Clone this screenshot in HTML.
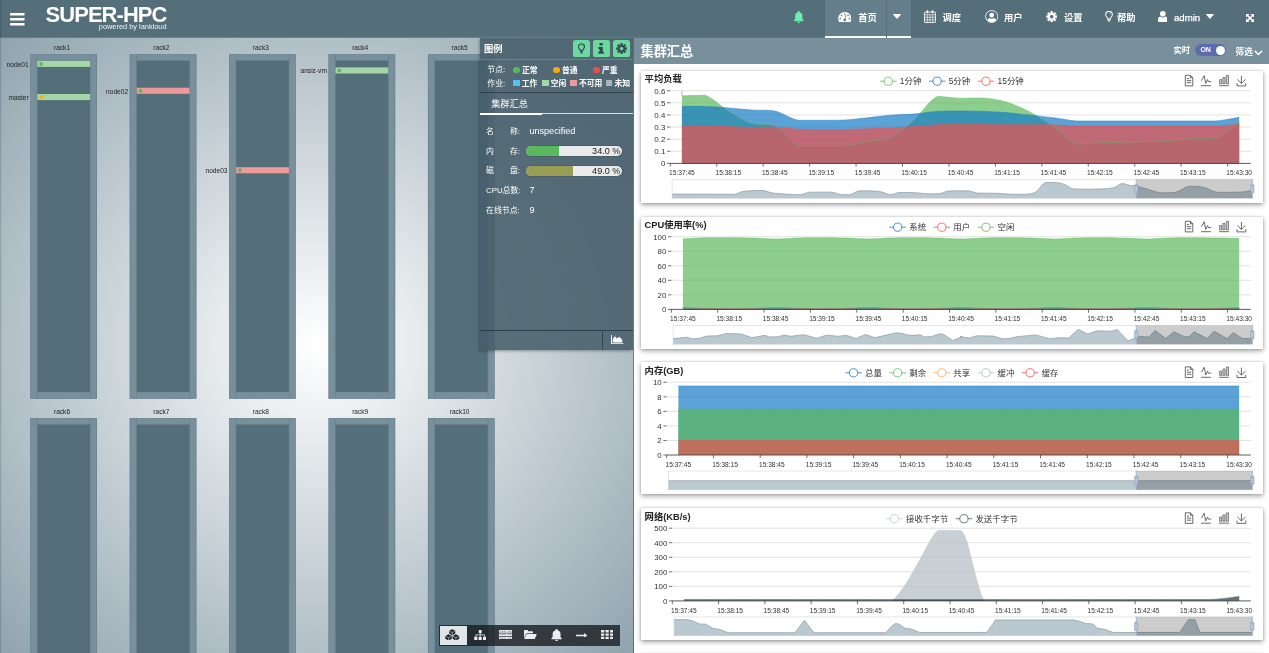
<!DOCTYPE html>
<html lang="zh-CN"><head><meta charset="utf-8"><title>SUPER-HPC</title><style>
*{box-sizing:border-box}
html,body{margin:0;padding:0}
body{width:1269px;height:653px;overflow:hidden;position:relative;background:#fff;font-family:"Liberation Sans","Noto Sans CJK SC",sans-serif;color:#fff}
.abs{position:absolute}
#hdr{will-change:transform;z-index:5;position:absolute;left:0;top:0;width:1269px;height:38px;background:linear-gradient(to bottom,#546e7a 0,#546e7a 37px,rgba(84,110,122,.72) 37px,rgba(84,110,122,.72) 38px)}
#hdr .t{position:absolute;top:10.5px;font-size:9.3px;line-height:14px;font-weight:bold;color:#fff;white-space:nowrap}
#hdr svg{position:absolute}
#left{will-change:transform;position:absolute;left:0;top:37px;width:634px;height:616px;overflow:hidden;background:radial-gradient(ellipse farthest-corner at 50% 50%,#ffffff 0%,#90a4ae 100%)}
.rack{position:absolute;width:66.4px;background:#78909c;box-shadow:inset 0 0 0 0.5px #6d8793}
.rack i{position:absolute;left:6.8px;right:6.3px;top:6.4px;bottom:6.6px;background:#546e7a;display:block}
.rack u{position:absolute;left:6.5px;right:6px;top:0;bottom:0;border-left:0.7px solid rgba(84,110,122,.55);border-right:0.7px solid rgba(84,110,122,.55);display:block}
.rl{position:absolute;width:66px;text-align:center;font-size:6.6px;line-height:8px;color:#222}
.nl{position:absolute;text-align:right;font-size:6.6px;line-height:8px;color:#222;width:40px}
.nb{position:absolute;height:6.4px;width:53.4px}
.nb b{position:absolute;left:1.6px;top:1.15px;width:4px;height:4px;border-radius:50%;display:block}
#right{will-change:transform;position:absolute;left:634px;top:37px;width:635px;height:616px;background:#fff;overflow:hidden}
#sub{position:absolute;left:0;top:0;width:635px;height:26.600px;background:#78909c}
.card{position:absolute;left:7px;width:622px;height:132px;background:#fff;box-shadow:0 2px 5px rgba(0,0,0,.36),0 0 2px rgba(0,0,0,.2)}
.card svg{position:absolute;left:0;top:0}
</style></head><body>
<div id="hdr">
<svg style="left:9.6px;top:13.1px" width="15" height="13" viewBox="0 0 15 13"><rect x="0" y="0" width="14.6" height="2.4" rx="0.6" fill="#fff"/><rect x="0" y="5" width="14.6" height="2.4" rx="0.6" fill="#fff"/><rect x="0" y="10" width="14.6" height="2.4" rx="0.6" fill="#fff"/></svg>
<div class="abs" style="left:45.6px;top:-0.3px;font-size:21.9px;line-height:30px;font-weight:bold;letter-spacing:-0.9px;color:#fff;white-space:nowrap">SUPER-HPC</div>
<div class="abs" style="left:98.8px;top:22.3px;font-size:7.4px;line-height:9px;color:#f3f6f7;white-space:nowrap">powered by lankloud</div>
<div class="abs" style="left:825px;top:0;width:61.2px;height:38px;background:#647f8b;border-bottom:2px solid #fff"></div>
<div class="abs" style="left:887px;top:0;width:23.6px;height:38px;background:#647f8b;border-bottom:2px solid #fff"></div>
<svg style="left:793px;top:10.8px;position:absolute" width="11.6" height="12.1" viewBox="2.6 1.2 18.8 22.3" ><path fill="#69f0ae" d="M12 1.2c-1 0-1.7.8-1.7 1.7v.5C7.3 4.200 5.400 6.900 5.400 10v4.600c0 1.700-.8 3.200-2.200 4.300-.5.400-.2 1.300.5 1.300h16.600c.7 0 1-.9.500-1.300-1.400-1.100-2.200-2.600-2.200-4.300V10c0-3.100-1.900-5.800-4.900-6.600v-.5c0-.9-.7-1.700-1.700-1.700z"/><path fill="#69f0ae" d="M9.600 21.200h4.800c0 1.300-1.100 2.300-2.400 2.300s-2.400-1-2.400-2.300z"/></svg>
<svg style="left:837.8px;top:11.8px;position:absolute" width="13.6" height="10.4" viewBox="0.5 0.5 27 21.200" ><path fill="#fff" d="M14 0.500C6.500.5.5 6.500.5 14c0 2.600.7 5 2 7 .3.500.8.700 1.300.700h20.400c.5 0 1-.2 1.300-.7 1.300-2 2-4.400 2-7C27.500 6.500 21.500.5 14 .5z"/><circle cx="4.6" cy="14" r="1.700" fill="#647f8b"/><circle cx="7.3" cy="7.4" r="1.700" fill="#647f8b"/><circle cx="14" cy="4.5" r="1.700" fill="#647f8b"/><circle cx="20.7" cy="7.4" r="1.700" fill="#647f8b"/><circle cx="23.4" cy="14" r="1.700" fill="#647f8b"/><path fill="#647f8b" d="M15.600 6.300l1.500.5-1.700 7.300c1.100.6 1.700 1.900 1.300 3.200-.4 1.500-2 2.400-3.500 2-1.500-.4-2.400-2-2-3.500.3-1.200 1.400-2 2.600-2.100z"/></svg>
<svg style="left:893.1px;top:14.2px;position:absolute" width="8" height="4.9" viewBox="0 0 10 6" preserveAspectRatio="none"><path fill="#fff" d="M0.300 0h9.400c.3 0 .4.300.2.500L5.300 5.800c-.2.200-.4.200-.6 0L.1.500C-.1.300 0 0 .3 0z"/></svg>
<svg style="left:924px;top:9.9px;position:absolute" width="12" height="13" viewBox="0 0 24 26" ><rect x="1" y="4.200" width="22" height="20.800" rx="1.200" fill="none" stroke="#fff" stroke-width="1.700"/><path stroke="#fff" stroke-width="1.300" fill="none" d="M1 9.400h22M1 14.600h22M1 19.800h22M6.500 9.400v15.600M12 9.400v15.600M17.500 9.400v15.600"/><rect x="5" y="0.600" width="3.600" height="6.200" rx="1.600" fill="#fff"/><rect x="15.400" y="0.600" width="3.600" height="6.200" rx="1.600" fill="#fff"/></svg>
<svg style="left:984.5px;top:9.9px;position:absolute" width="13.4" height="13" viewBox="0 0 26 26" preserveAspectRatio="none"><defs><clipPath id="ucp"><circle cx="13" cy="13" r="11.400"/></clipPath></defs><circle cx="13" cy="13" r="11.900" fill="none" stroke="#fff" stroke-width="1.700"/><g clip-path="url(#ucp)"><circle cx="13" cy="10.200" r="4.700" fill="#fff"/><path fill="#fff" d="M3.500 26c0-6 2-9.400 5.600-9.900 1.100 1 2.400 1.500 3.900 1.500s2.800-.5 3.900-1.500c3.600.5 5.600 3.900 5.600 9.900z"/></g></svg>
<svg style="left:1045.9px;top:10.6px;position:absolute" width="11.4" height="11.4" viewBox="0 0 24 24" ><path fill="#fff" fill-rule="evenodd" stroke="#fff" stroke-width="0.8" stroke-linejoin="round" d="M9.67 0.74 L14.33 0.74 L13.95 4.35 L16.03 5.21 L18.31 2.39 L21.61 5.69 L18.79 7.97 L19.65 10.05 L23.26 9.67 L23.26 14.33 L19.65 13.95 L18.79 16.03 L21.61 18.31 L18.31 21.61 L16.03 18.79 L13.95 19.65 L14.33 23.26 L9.67 23.26 L10.05 19.65 L7.97 18.79 L5.69 21.61 L2.39 18.31 L5.21 16.03 L4.35 13.95 L0.74 14.33 L0.74 9.67 L4.35 10.05 L5.21 7.97 L2.39 5.69 L5.69 2.39 L7.97 5.21 L10.05 4.35Z M7.80 12.00 a4.20 4.20 0 1 0 8.40 0 a4.20 4.20 0 1 0 -8.40 0Z"/></svg>
<svg style="left:1105px;top:10.6px;position:absolute" width="8" height="11.6" viewBox="0.500 0.300 15 23" ><path fill="none" stroke="#fff" stroke-width="2.0" d="M8 1.200c-3.700 0-6.600 2.800-6.600 6.300 0 2.100 1 3.500 2.100 4.800 1 1.200 1.600 2.300 1.700 3.700h5.600c.1-1.400.7-2.500 1.700-3.700 1.100-1.300 2.100-2.700 2.100-4.800 0-3.500-2.900-6.300-6.600-6.300z"/><path fill="#fff" d="M5.200 17h5.600v1.500H5.200zM5.200 19.300h5.600v1.500H5.200zM6.200 21.500h3.600c0 1-.8 1.700-1.800 1.700s-1.800-.7-1.800-1.700z"/><path fill="none" stroke="#fff" stroke-width="0.9" d="M8 4.200c1.700 0 3 1.200 3.200 2.600"/></svg>
<svg style="left:1157.8px;top:10.6px;position:absolute" width="9.6" height="11.4" viewBox="0.5 0.8 19 22.7" preserveAspectRatio="none"><circle cx="10" cy="6.400" r="5.600" fill="#fff"/><path fill="#fff" d="M4.800 11.600c1.400 1.300 3.200 2 5.200 2s3.800-.7 5.200-2c2.800.6 4.300 3 4.300 6.600v2.400c0 1.700-1.300 2.900-3 2.900H3.500c-1.700 0-3-1.200-3-2.900v-2.400c0-3.600 1.500-6 4.300-6.600z"/></svg>
<svg style="left:1206.4px;top:14.2px;position:absolute" width="7.8" height="4.9" viewBox="0 0 10 6" preserveAspectRatio="none"><path fill="#fff" d="M0.300 0h9.400c.3 0 .4.300.2.500L5.300 5.800c-.2.200-.4.200-.6 0L.1.500C-.1.300 0 0 .3 0z"/></svg>
<svg style="left:1245.9px;top:13.9px;position:absolute" width="8.1" height="8.1" viewBox="0 0 16 16" ><path fill="#fff" d="M0 0h7L4.600 2.400 8 5.800l3.400-3.400L9 0h7v7l-2.400-2.400L10.200 8l3.400 3.400L16 9v7H9l2.400-2.400L8 10.200l-3.400 3.400L7 16H0V9l2.400 2.400L5.800 8 2.400 4.600 0 7z"/></svg>
<div class="t" style="left:858.2px">首页</div>
<div class="t" style="left:942.5px">调度</div>
<div class="t" style="left:1004px">用户</div>
<div class="t" style="left:1063.9px">设置</div>
<div class="t" style="left:1116.9px">帮助</div>
<div class="t" style="left:1174px;font-weight:normal;font-size:9.6px;-webkit-text-stroke:0.25px #fff">admin</div>
</div>
<div id="left"><div class="abs" style="left:0;top:1px;width:634px;height:615px">
<svg class="abs" style="left:0;top:0" width="634" height="615" viewBox="0 38 634 615" font-family="Liberation Sans,Noto Sans CJK SC,sans-serif" font-size="6.6" fill="#222"><rect x="30.30" y="54.20" width="66.70" height="344.60" fill="#78909c"/><rect x="37.30" y="60.60" width="52.80" height="331.50" fill="#546e7a"/><rect x="30.60" y="54.50" width="66.10" height="344.00" fill="none" stroke="#5f7b88" stroke-opacity=".7" stroke-width="0.6"/><path d="M37.10 54.20v344.60M90.30 54.20v344.60" stroke="#5f7b88" stroke-opacity=".8" stroke-width="0.6" fill="none"/><text x="62.00" y="50.30" text-anchor="middle">rack1</text><rect x="30.30" y="418.10" width="66.70" height="260.00" fill="#78909c"/><rect x="37.30" y="424.50" width="52.80" height="246.90" fill="#546e7a"/><rect x="30.60" y="418.40" width="66.10" height="259.40" fill="none" stroke="#5f7b88" stroke-opacity=".7" stroke-width="0.6"/><path d="M37.10 418.10v260.00M90.30 418.10v260.00" stroke="#5f7b88" stroke-opacity=".8" stroke-width="0.6" fill="none"/><text x="62.00" y="414.20" text-anchor="middle">rack6</text><rect x="129.70" y="54.20" width="66.70" height="344.60" fill="#78909c"/><rect x="136.70" y="60.60" width="52.80" height="331.50" fill="#546e7a"/><rect x="130.00" y="54.50" width="66.10" height="344.00" fill="none" stroke="#5f7b88" stroke-opacity=".7" stroke-width="0.6"/><path d="M136.50 54.20v344.60M189.70 54.20v344.60" stroke="#5f7b88" stroke-opacity=".8" stroke-width="0.6" fill="none"/><text x="161.40" y="50.30" text-anchor="middle">rack2</text><rect x="129.70" y="418.10" width="66.70" height="260.00" fill="#78909c"/><rect x="136.70" y="424.50" width="52.80" height="246.90" fill="#546e7a"/><rect x="130.00" y="418.40" width="66.10" height="259.40" fill="none" stroke="#5f7b88" stroke-opacity=".7" stroke-width="0.6"/><path d="M136.50 418.10v260.00M189.70 418.10v260.00" stroke="#5f7b88" stroke-opacity=".8" stroke-width="0.6" fill="none"/><text x="161.40" y="414.20" text-anchor="middle">rack7</text><rect x="229.10" y="54.20" width="66.70" height="344.60" fill="#78909c"/><rect x="236.10" y="60.60" width="52.80" height="331.50" fill="#546e7a"/><rect x="229.40" y="54.50" width="66.10" height="344.00" fill="none" stroke="#5f7b88" stroke-opacity=".7" stroke-width="0.6"/><path d="M235.90 54.20v344.60M289.10 54.20v344.60" stroke="#5f7b88" stroke-opacity=".8" stroke-width="0.6" fill="none"/><text x="260.80" y="50.30" text-anchor="middle">rack3</text><rect x="229.10" y="418.10" width="66.70" height="260.00" fill="#78909c"/><rect x="236.10" y="424.50" width="52.80" height="246.90" fill="#546e7a"/><rect x="229.40" y="418.40" width="66.10" height="259.40" fill="none" stroke="#5f7b88" stroke-opacity=".7" stroke-width="0.6"/><path d="M235.90 418.10v260.00M289.10 418.10v260.00" stroke="#5f7b88" stroke-opacity=".8" stroke-width="0.6" fill="none"/><text x="260.80" y="414.20" text-anchor="middle">rack8</text><rect x="328.50" y="54.20" width="66.70" height="344.60" fill="#78909c"/><rect x="335.50" y="60.60" width="52.80" height="331.50" fill="#546e7a"/><rect x="328.80" y="54.50" width="66.10" height="344.00" fill="none" stroke="#5f7b88" stroke-opacity=".7" stroke-width="0.6"/><path d="M335.30 54.20v344.60M388.50 54.20v344.60" stroke="#5f7b88" stroke-opacity=".8" stroke-width="0.6" fill="none"/><text x="360.20" y="50.30" text-anchor="middle">rack4</text><rect x="328.50" y="418.10" width="66.70" height="260.00" fill="#78909c"/><rect x="335.50" y="424.50" width="52.80" height="246.90" fill="#546e7a"/><rect x="328.80" y="418.40" width="66.10" height="259.40" fill="none" stroke="#5f7b88" stroke-opacity=".7" stroke-width="0.6"/><path d="M335.30 418.10v260.00M388.50 418.10v260.00" stroke="#5f7b88" stroke-opacity=".8" stroke-width="0.6" fill="none"/><text x="360.20" y="414.20" text-anchor="middle">rack9</text><rect x="427.95" y="54.20" width="66.70" height="344.60" fill="#78909c"/><rect x="434.95" y="60.60" width="52.80" height="331.50" fill="#546e7a"/><rect x="428.25" y="54.50" width="66.10" height="344.00" fill="none" stroke="#5f7b88" stroke-opacity=".7" stroke-width="0.6"/><path d="M434.75 54.20v344.60M487.95 54.20v344.60" stroke="#5f7b88" stroke-opacity=".8" stroke-width="0.6" fill="none"/><text x="459.65" y="50.30" text-anchor="middle">rack5</text><rect x="427.95" y="418.10" width="66.70" height="260.00" fill="#78909c"/><rect x="434.95" y="424.50" width="52.80" height="246.90" fill="#546e7a"/><rect x="428.25" y="418.40" width="66.10" height="259.40" fill="none" stroke="#5f7b88" stroke-opacity=".7" stroke-width="0.6"/><path d="M434.75 418.10v260.00M487.95 418.10v260.00" stroke="#5f7b88" stroke-opacity=".8" stroke-width="0.6" fill="none"/><text x="459.65" y="414.20" text-anchor="middle">rack10</text><rect x="37.30" y="60.80" width="52.8" height="6.100" fill="#a5d6a7"/><circle cx="41.10" cy="63.90" r="2" fill="#5cb85c"/><text x="28.70" y="66.70" text-anchor="end">node01</text><rect x="37.30" y="94.00" width="52.8" height="6.100" fill="#a5d6a7"/><circle cx="41.10" cy="97.10" r="2" fill="#ffb300"/><text x="28.70" y="99.90" text-anchor="end">master</text><rect x="136.70" y="87.70" width="52.8" height="6.100" fill="#ef9a9a"/><circle cx="140.50" cy="90.80" r="2" fill="#5cb85c"/><text x="128.10" y="93.60" text-anchor="end">node02</text><rect x="236.10" y="167.20" width="52.8" height="6.100" fill="#ef9a9a"/><circle cx="239.90" cy="170.30" r="2" fill="#5cb85c"/><text x="227.50" y="173.10" text-anchor="end">node03</text><rect x="335.50" y="67.40" width="52.8" height="6.100" fill="#a5d6a7"/><circle cx="339.30" cy="70.50" r="2" fill="#5cb85c"/><text x="326.90" y="73.30" text-anchor="end">ansiz-vm</text></svg>
<div class="abs" style="left:480.4px;top:0;width:153px;height:311.7px;background:rgba(71,95,107,0.88);box-shadow:-1.5px 1px 3px rgba(0,0,0,.35)">
<div class="abs" style="left:3.6px;top:4.7px;font-size:9.3px;line-height:13.02px;white-space:nowrap;color:#fff;font-weight:bold;">图例</div>
<div class="abs" style="left:92.7px;top:2.1px;width:16.6px;height:16.9px;border-radius:2.6px;background:#6cd9a0"></div>
<div class="abs" style="left:112.7px;top:2.1px;width:16.6px;height:16.9px;border-radius:2.6px;background:#6cd9a0"></div>
<div class="abs" style="left:132.7px;top:2.1px;width:16.6px;height:16.9px;border-radius:2.6px;background:#6cd9a0"></div>
<svg style="left:97.60000000000002px;top:5px;position:absolute" width="6.9" height="11.2" viewBox="0.500 0.300 15 23" ><path fill="none" stroke="#37474f" stroke-width="2.5" d="M8 1.200c-3.700 0-6.600 2.800-6.600 6.300 0 2.100 1 3.500 2.100 4.800 1 1.200 1.600 2.300 1.700 3.700h5.600c.1-1.400.7-2.500 1.700-3.700 1.100-1.300 2.100-2.700 2.100-4.800 0-3.500-2.900-6.300-6.600-6.300z"/><path fill="#37474f" d="M5.200 17h5.600v1.500H5.200zM5.200 19.300h5.600v1.500H5.200zM6.200 21.500h3.600c0 1-.8 1.700-1.800 1.700s-1.800-.7-1.800-1.700z"/><path fill="none" stroke="#37474f" stroke-width="0.9" d="M8 4.200c1.700 0 3 1.200 3.200 2.600"/></svg>
<svg style="left:117.89999999999998px;top:5.200000000000003px;position:absolute" width="6.3" height="10.8" viewBox="0 0 7 12" preserveAspectRatio="none"><path fill="#37474f" d="M1.700 0h3.600v2.900H1.700zM0.400 4.400h4.900v5.400h1.300V12H0.400V9.800h1.300V6.600H0.400z"/></svg>
<svg style="left:135.39999999999998px;top:4.899999999999999px;position:absolute" width="11.2" height="11.2" viewBox="0 0 24 24" ><path fill="#37474f" fill-rule="evenodd" stroke="#37474f" stroke-width="0.8" stroke-linejoin="round" d="M9.67 0.74 L14.33 0.74 L13.95 4.35 L16.03 5.21 L18.31 2.39 L21.61 5.69 L18.79 7.97 L19.65 10.05 L23.26 9.67 L23.26 14.33 L19.65 13.95 L18.79 16.03 L21.61 18.31 L18.31 21.61 L16.03 18.79 L13.95 19.65 L14.33 23.26 L9.67 23.26 L10.05 19.65 L7.97 18.79 L5.69 21.61 L2.39 18.31 L5.21 16.03 L4.35 13.95 L0.74 14.33 L0.74 9.67 L4.35 10.05 L5.21 7.97 L2.39 5.69 L5.69 2.39 L7.97 5.21 L10.05 4.35Z M7.80 12.00 a4.20 4.20 0 1 0 8.40 0 a4.20 4.20 0 1 0 -8.40 0Z"/></svg>
<div class="abs" style="left:0;top:21.0px;width:153px;height:1px;background:rgba(255,255,255,.16)"></div>
<div class="abs" style="left:6.9px;top:26.4px;font-size:7.9px;line-height:11.06px;white-space:nowrap;color:#fff;">节点:</div>
<div class="abs" style="left:32.9px;top:28.5px;width:6.6px;height:6.6px;border-radius:50%;background:#5cb85c"></div>
<div class="abs" style="left:41.7px;top:27.7px;font-size:7.8px;line-height:10.92px;white-space:nowrap;color:#fff;font-weight:bold;">正常</div>
<div class="abs" style="left:72.7px;top:28.5px;width:6.6px;height:6.6px;border-radius:50%;background:#f5a80f"></div>
<div class="abs" style="left:81.7px;top:27.7px;font-size:7.8px;line-height:10.92px;white-space:nowrap;color:#fff;font-weight:bold;">普通</div>
<div class="abs" style="left:112.7px;top:28.5px;width:6.6px;height:6.6px;border-radius:50%;background:#ef4b4b"></div>
<div class="abs" style="left:121.6px;top:27.7px;font-size:7.8px;line-height:10.92px;white-space:nowrap;color:#fff;font-weight:bold;">严重</div>
<div class="abs" style="left:6.9px;top:39.9px;font-size:7.9px;line-height:11.06px;white-space:nowrap;color:#fff;">作业:</div>
<div class="abs" style="left:32.8px;top:41.8px;width:6.5px;height:6.3px;background:#4fc3f7"></div>
<div class="abs" style="left:41.3px;top:41.2px;font-size:7.8px;line-height:10.92px;white-space:nowrap;color:#fff;font-weight:bold;">工作</div>
<div class="abs" style="left:61.8px;top:41.8px;width:6.5px;height:6.3px;background:#a5d6a7"></div>
<div class="abs" style="left:70.3px;top:41.2px;font-size:7.8px;line-height:10.92px;white-space:nowrap;color:#fff;font-weight:bold;">空闲</div>
<div class="abs" style="left:89.8px;top:41.8px;width:6.5px;height:6.3px;background:#ef9a9a"></div>
<div class="abs" style="left:98.5px;top:41.2px;font-size:7.8px;line-height:10.92px;white-space:nowrap;color:#fff;font-weight:bold;">不可用</div>
<div class="abs" style="left:125.6px;top:41.8px;width:6.5px;height:6.3px;background:#a9b7bd"></div>
<div class="abs" style="left:134.1px;top:41.2px;font-size:7.8px;line-height:10.92px;white-space:nowrap;color:#fff;font-weight:bold;">未知</div>
<div class="abs" style="left:0;top:54.2px;width:153px;height:1px;background:rgba(30,45,52,.6)"></div>
<div class="abs" style="left:10.8px;top:60.1px;font-size:9.2px;line-height:12.88px;white-space:nowrap;color:#fff;">集群汇总</div>
<div class="abs" style="left:0;top:75.4px;width:153px;height:0.9px;background:rgba(255,255,255,.8)"></div>
<div class="abs" style="left:0;top:74.6px;width:61.3px;height:2.3px;background:#fff"></div>
<div class="abs" style="left:5.6px;top:87.8px;font-size:7.9px;line-height:11.06px;white-space:nowrap;color:#fff;">名<span style="display:inline-block;width:16px"></span>称:</div>
<div class="abs" style="left:49.0px;top:87.0px;font-size:9.1px;line-height:12.74px;white-space:nowrap;color:#fff;">unspecified</div>
<div class="abs" style="left:5.6px;top:107.6px;font-size:7.9px;line-height:11.06px;white-space:nowrap;color:#fff;">内<span style="display:inline-block;width:16px"></span>存:</div>
<div class="abs" style="left:5.6px;top:127.4px;font-size:7.9px;line-height:11.06px;white-space:nowrap;color:#fff;">磁<span style="display:inline-block;width:16px"></span>盘:</div>
<div class="abs" style="left:5.6px;top:146.9px;font-size:7.9px;line-height:11.06px;white-space:nowrap;color:#fff;">CPU总数:</div>
<div class="abs" style="left:49.2px;top:146.3px;font-size:9.1px;line-height:12.74px;white-space:nowrap;color:#fff;">7</div>
<div class="abs" style="left:5.6px;top:166.7px;font-size:7.9px;line-height:11.06px;white-space:nowrap;color:#fff;">在线节点:</div>
<div class="abs" style="left:49.2px;top:166.3px;font-size:9.1px;line-height:12.74px;white-space:nowrap;color:#fff;">9</div>
<div class="abs" style="left:45.8px;top:108.0px;width:95.8px;height:10.2px;border-radius:5.1px;background:#ebebeb;overflow:hidden;box-shadow:0 0 0 0.5px rgba(40,60,70,.5)"><div style="width:34%;height:100%;background:#5cb85c"></div><div class="abs" style="right:1.6px;top:0;font-size:9.1px;line-height:10.8px;color:#222">34.0 %</div></div>
<div class="abs" style="left:45.8px;top:127.8px;width:95.8px;height:10.2px;border-radius:5.1px;background:#ebebeb;overflow:hidden;box-shadow:0 0 0 0.5px rgba(40,60,70,.5)"><div style="width:49%;height:100%;background:#9a9d54"></div><div class="abs" style="right:1.6px;top:0;font-size:9.1px;line-height:10.8px;color:#222">49.0 %</div></div>
<div class="abs" style="left:0;top:292.0px;width:153px;height:1px;background:rgba(30,45,52,.7)"></div>
<div class="abs" style="left:121.6px;top:292.5px;width:1px;height:19px;background:rgba(30,45,52,.6)"></div>
<svg style="left:131.10000000000002px;top:296.7px;position:absolute" width="12.4" height="9.2" viewBox="0 0 24 18" preserveAspectRatio="none"><path fill="#fff" d="M0 0h1.800v16.200H24V18H0z"/><path fill="#fff" d="M3.400 14.800V8.200L7.400 2.600l4.200 4.200 4.600-3.400 5.600 6.600v4.800z"/></svg>
</div>
<div class="abs" style="left:439.3px;top:587.0px;width:180.4px;height:20.7px;background:rgba(24,28,31,0.80)">
<div class="abs" style="left:0.5px;top:0.5px;width:27.1px;height:19.7px;background:#e0e5e8"></div>
<svg style="left:6.2px;top:3.7px;position:absolute" width="14.5" height="11.8" viewBox="0.500 0 23 19.2" preserveAspectRatio="none"><path fill="#1c2428" d="M12.00 0.40 L16.80 2.99 L16.80 7.41 L12.00 10.00 L7.20 7.41 L7.20 2.99Z"/><path fill="none" stroke="#e0e5e8" stroke-width="0.9" d="M7.80 3.49L12.00 5.78L16.20 3.49M12.00 5.78V9.30"/><path fill="#1c2428" d="M6.20 8.40 L11.40 11.21 L11.40 15.99 L6.20 18.80 L1.00 15.99 L1.00 11.21Z"/><path fill="none" stroke="#e0e5e8" stroke-width="0.9" d="M1.60 11.71L6.20 14.22L10.80 11.71M6.20 14.22V18.10"/><path fill="#1c2428" d="M17.80 8.40 L23.00 11.21 L23.00 15.99 L17.80 18.80 L12.60 15.99 L12.60 11.21Z"/><path fill="none" stroke="#e0e5e8" stroke-width="0.9" d="M13.20 11.71L17.80 14.22L22.40 11.71M17.80 14.22V18.10"/></svg>
<svg style="left:34.7px;top:4.8px;position:absolute" width="12.4" height="10.3" viewBox="0 0 22 16" preserveAspectRatio="none"><path fill="#eceff1" d="M8.500 0h5v4.600h-5zM0.400 10.400h5.600V15.600H0.400zM8.200 10.400h5.600V15.600H8.200zM16 10.400h5.600V15.600H16z"/><path fill="none" stroke="#eceff1" stroke-width="1.300" d="M11 4.600V10.400M3.200 10.400V7.500H18.800V10.400"/></svg>
<svg style="left:59.7px;top:4.7px;position:absolute" width="13" height="9.4" viewBox="0 0 22 15" preserveAspectRatio="none"><rect x="0" y="0" width="22" height="4.200" rx="0.5" fill="#eceff1"/><rect x="1.4" y="1.45" width="11" height="1.3" fill="#9aa3a8"/><rect x="15.6" y="1.45" width="2" height="1.3" fill="#6b7378"/><rect x="18.6" y="1.45" width="2" height="1.3" fill="#6b7378"/><rect x="0" y="5.4" width="22" height="4.200" rx="0.5" fill="#eceff1"/><rect x="1.4" y="6.8500000000000005" width="11" height="1.3" fill="#9aa3a8"/><rect x="15.6" y="6.8500000000000005" width="2" height="1.3" fill="#6b7378"/><rect x="18.6" y="6.8500000000000005" width="2" height="1.3" fill="#6b7378"/><rect x="0" y="10.8" width="22" height="4.200" rx="0.5" fill="#eceff1"/><rect x="1.4" y="12.25" width="11" height="1.3" fill="#9aa3a8"/><rect x="15.6" y="12.25" width="2" height="1.3" fill="#6b7378"/><rect x="18.6" y="12.25" width="2" height="1.3" fill="#6b7378"/></svg>
<svg style="left:85.2px;top:4.6px;position:absolute" width="12.7" height="9.4" viewBox="0 0 24.500 16" preserveAspectRatio="none"><path fill="#eceff1" d="M0 1.400C0 .6.600 0 1.400 0h5.200c.8 0 1.400.6 1.400 1.400v.8h7.800c.8 0 1.400.6 1.400 1.400v1.800H6.200c-1.100 0-2.100.6-2.600 1.600L0 14z"/><path fill="#eceff1" d="M6.400 7h17c.7 0 1.100.7.800 1.300l-3.400 6.900c-.3.500-.8.800-1.400.8H1.200c-.6 0-.9-.6-.7-1.100l3.700-6.800C4.600 7.400 5.400 7 6.400 7z"/></svg>
<svg style="left:111.7px;top:3.8px;position:absolute" width="11.2" height="12" viewBox="2.6 1.2 18.8 22.3" preserveAspectRatio="none"><path fill="#eceff1" d="M12 1.2c-1 0-1.7.8-1.7 1.7v.5C7.3 4.200 5.400 6.900 5.400 10v4.600c0 1.700-.8 3.200-2.200 4.300-.5.400-.2 1.300.5 1.300h16.600c.7 0 1-.9.500-1.300-1.400-1.100-2.200-2.600-2.200-4.300V10c0-3.100-1.900-5.800-4.900-6.600v-.5c0-.9-.7-1.700-1.700-1.700z"/><path fill="#eceff1" d="M9.600 21.200h4.800c0 1.300-1.100 2.300-2.400 2.300s-2.400-1-2.400-2.300z"/></svg>
<svg style="left:136.6px;top:7.5px;position:absolute" width="11.3" height="4.9" viewBox="0 0 23 10" preserveAspectRatio="none"><path fill="#eceff1" d="M0 3.400h16.500V0L23 5l-6.500 5V6.600H0z"/></svg>
<svg style="left:161.4px;top:4.9px;position:absolute" width="12.3" height="9.3" viewBox="0 0 22 16" preserveAspectRatio="none"><rect x="0.0" y="0.0" width="5.800" height="4.200" rx="0.4" fill="#eceff1"/><rect x="8.1" y="0.0" width="5.800" height="4.200" rx="0.4" fill="#eceff1"/><rect x="16.2" y="0.0" width="5.800" height="4.200" rx="0.4" fill="#eceff1"/><rect x="0.0" y="5.9" width="5.800" height="4.200" rx="0.4" fill="#eceff1"/><rect x="8.1" y="5.9" width="5.800" height="4.200" rx="0.4" fill="#eceff1"/><rect x="16.2" y="5.9" width="5.800" height="4.200" rx="0.4" fill="#eceff1"/><rect x="0.0" y="11.8" width="5.800" height="4.200" rx="0.4" fill="#eceff1"/><rect x="8.1" y="11.8" width="5.800" height="4.200" rx="0.4" fill="#eceff1"/><rect x="16.2" y="11.8" width="5.800" height="4.200" rx="0.4" fill="#eceff1"/></svg>
</div>
</div></div>
<div id="right"><div id="sub"></div><div class="abs" style="left:0;top:1px;width:635px;height:615px"><div class="abs" style="left:6.5px;top:5.9px;font-size:13.2px;line-height:16px;font-weight:bold;color:#fff;white-space:nowrap">集群汇总</div>
<div class="abs" style="left:539.4px;top:7.2px;font-size:8.3px;line-height:11px;font-weight:bold;color:#fff;white-space:nowrap">实时</div>
<div class="abs" style="left:561.4px;top:6.300px;width:30.8px;height:12px;border-radius:6px;background:#5c6bb0"><span class="abs" style="left:5px;top:0;font-size:7px;line-height:12.2px;color:#fff;font-weight:bold">ON</span><span class="abs" style="right:1.5px;top:1.5px;width:9px;height:9px;border-radius:50%;background:#fff"></span></div>
<div class="abs" style="left:601.6px;top:9px;font-size:8.6px;line-height:11px;font-weight:bold;color:#fff;white-space:nowrap">筛选</div>
<svg class="abs" style="left:619.6px;top:11.8px" width="9" height="6" viewBox="0 0 9 6"><path d="M0.800 0.900L4.400 4.500L8 0.900" fill="none" stroke="#fff" stroke-width="1.5"/></svg>
<div class="card" style="top:33px;height:132px"><svg width="622" height="132" viewBox="0 0 622 132" font-family="Liberation Sans,Noto Sans CJK SC,sans-serif"><g transform="translate(0,0.00)"><text x="3.60" y="11.30" font-size="9.3" text-anchor="start" fill="#222" font-weight="bold">平均负载</text><path d="M239.04 10.20h16.500" stroke="rgb(92,184,92)" stroke-width="0.8" fill="none"/><circle cx="247.29" cy="10.20" r="4.1" fill="#fff" stroke="rgb(92,184,92)" stroke-width="0.8"/><text x="258.84" y="13.20" font-size="8.43" text-anchor="start" fill="#333">1分钟</text><path d="M287.88 10.20h16.500" stroke="rgb(22,122,196)" stroke-width="0.8" fill="none"/><circle cx="296.13" cy="10.20" r="4.1" fill="#fff" stroke="rgb(22,122,196)" stroke-width="0.8"/><text x="307.68" y="13.20" font-size="8.43" text-anchor="start" fill="#333">5分钟</text><path d="M336.73 10.20h16.500" stroke="rgb(237,82,79)" stroke-width="0.8" fill="none"/><circle cx="344.98" cy="10.20" r="4.1" fill="#fff" stroke="rgb(237,82,79)" stroke-width="0.8"/><text x="356.53" y="13.20" font-size="8.43" text-anchor="start" fill="#333">15分钟</text><g fill="none" stroke="#404040" stroke-width="0.78" stroke-linejoin="round" stroke-linecap="butt"><path d="M544.30 4.30 h5.1 l2.4 2.500 v8.100 h-7.5z M549.40 4.30 v2.500 h2.400"/><path d="M545.90 7.50h2M545.90 9.60h4.300M545.90 11.70h4.300" stroke-width="0.8"/><path d="M560.50 9.60 l2.700 -4.900 l1.500 7.700 l1.900 -3.800 l0.800 2 h2.800"/><path d="M560.10 14.70h9.800"/><path fill="#cfcfcf" stroke-width="0.6" d="M578.60 8.60h2.100v4.200h-2.100z M581.90 6.40h2.100v6.400h-2.100z M585.30 4.40h2.200v8.400h-2.200z"/><path d="M578.10 14.70h9.800"/><path d="M600.40 5.00v7.400 M596.30 8.40l4.100 4 l4.100 -4 M596.00 12.10v2.800h8.800v-2.800"/></g><path d="M29.30 80.28H609.80" stroke="#d6d6d6" stroke-width="0.7"/><path d="M29.30 68.17H609.80" stroke="#d6d6d6" stroke-width="0.7"/><path d="M29.30 56.05H609.80" stroke="#d6d6d6" stroke-width="0.7"/><path d="M29.30 43.93H609.80" stroke="#d6d6d6" stroke-width="0.7"/><path d="M29.30 31.82H609.80" stroke="#d6d6d6" stroke-width="0.7"/><path d="M29.30 19.70H609.80" stroke="#d6d6d6" stroke-width="0.7"/><path d="M40.91 24.79C40.91 24.79 57.82 24.18 64.13 24.18C71.75 26.67 80.17 35.57 87.35 39.93C94.10 44.04 103.18 50.04 110.57 52.41C117.11 54.51 127.74 52.41 133.79 54.84C141.67 58.58 149.11 71.13 157.01 74.47C163.04 74.47 173.26 74.47 180.23 74.47C187.20 74.47 196.53 74.47 203.45 74.47C210.46 73.88 219.71 71.81 226.67 70.59C233.65 69.37 243.65 69.28 249.89 66.35C257.58 62.74 266.57 54.54 273.11 48.78C280.51 42.26 288.17 29.19 296.33 25.39C302.10 25.39 312.57 26.98 319.55 27.21C326.51 27.21 335.86 26.97 342.77 26.97C349.79 27.57 359.26 29.16 365.99 31.21C373.19 33.41 382.52 37.64 389.21 41.15C396.45 44.94 405.68 50.93 412.43 55.57C419.61 60.49 427.91 70.31 435.65 73.01C441.84 73.01 451.90 72.07 458.87 71.80C465.83 71.53 475.12 71.38 482.09 71.20C489.06 71.01 498.35 70.86 505.31 70.59C512.28 70.32 521.57 69.81 528.53 69.38C535.50 68.94 544.77 67.97 551.75 67.68C558.71 67.44 568.69 67.68 574.97 67.44C582.63 64.72 598.19 51.20 598.19 51.20L598.19 92.40L40.91 92.40Z" fill="rgba(92,184,92,0.7)"/><path d="M40.91 35.33C40.91 35.33 57.17 35.33 64.13 35.45C71.10 35.69 80.39 36.38 87.35 36.91C94.32 37.43 103.59 38.51 110.57 38.97C117.53 39.42 127.08 38.97 133.79 39.93C141.01 41.54 149.78 47.81 157.01 49.26C163.72 49.26 173.26 49.26 180.23 49.26C187.20 49.23 196.50 49.26 203.45 49.02C210.43 48.64 219.71 47.45 226.67 46.72C233.64 45.99 242.91 44.74 249.89 44.18C256.84 43.61 266.16 43.53 273.11 42.96C280.09 42.40 289.34 40.88 296.33 40.42C303.28 39.97 312.58 39.93 319.55 39.93C326.52 39.93 335.81 40.17 342.77 40.42C349.74 40.67 359.04 41.07 365.99 41.63C372.97 42.20 382.24 43.41 389.21 44.18C396.18 44.94 405.48 45.85 412.43 46.72C419.41 47.59 428.65 49.50 435.65 49.99C442.58 49.99 451.90 49.99 458.87 49.99C465.84 49.99 475.12 49.99 482.09 49.99C489.06 49.99 498.34 49.99 505.31 49.99C512.28 49.99 521.56 49.99 528.53 49.99C535.50 49.99 544.78 49.99 551.75 49.99C558.72 49.99 568.05 49.99 574.97 49.99C581.98 49.42 598.19 46.24 598.19 46.24L598.19 92.40L40.91 92.40Z" fill="rgba(22,122,196,0.7)"/><path d="M40.91 55.08C40.91 55.08 57.17 54.47 64.13 54.47C71.10 54.55 80.38 55.29 87.35 55.57C94.31 55.84 103.60 56.22 110.57 56.29C117.53 56.29 126.84 56.05 133.79 56.05C140.77 56.32 150.03 57.75 157.01 58.11C163.96 58.47 173.26 58.42 180.23 58.47C187.20 58.47 196.49 58.47 203.45 58.47C210.42 58.35 219.70 57.86 226.67 57.63C233.64 57.39 242.93 57.21 249.89 56.90C256.86 56.59 266.15 56.04 273.11 55.57C280.08 55.09 289.35 54.09 296.33 53.75C303.29 53.40 312.58 53.32 319.55 53.26C326.52 53.26 335.80 53.33 342.77 53.38C349.74 53.44 359.02 53.59 365.99 53.63C372.96 53.63 382.24 53.63 389.21 53.63C396.18 53.66 405.47 53.65 412.43 53.87C419.40 54.09 428.68 54.90 435.65 55.08C442.61 55.08 451.90 55.08 458.87 55.08C465.84 55.08 475.12 55.08 482.09 55.08C489.06 55.08 498.34 55.08 505.31 55.08C512.28 55.08 521.56 55.08 528.53 55.08C535.50 55.08 544.78 55.08 551.75 55.08C558.72 55.08 568.02 55.08 574.97 55.08C581.95 54.77 598.19 53.02 598.19 53.02L598.19 92.40L40.91 92.40Z" fill="rgba(237,82,79,0.7)"/><path d="M40.91 24.79C40.91 24.79 57.82 24.18 64.13 24.18C71.75 26.67 80.17 35.57 87.35 39.93C94.10 44.04 103.18 50.04 110.57 52.41C117.11 54.51 127.74 52.41 133.79 54.84C141.67 58.58 149.11 71.13 157.01 74.47C163.04 74.47 173.26 74.47 180.23 74.47C187.20 74.47 196.53 74.47 203.45 74.47C210.46 73.88 219.71 71.81 226.67 70.59C233.65 69.37 243.65 69.28 249.89 66.35C257.58 62.74 266.57 54.54 273.11 48.78C280.51 42.26 288.17 29.19 296.33 25.39C302.10 25.39 312.57 26.98 319.55 27.21C326.51 27.21 335.86 26.97 342.77 26.97C349.79 27.57 359.26 29.16 365.99 31.21C373.19 33.41 382.52 37.64 389.21 41.15C396.45 44.94 405.68 50.93 412.43 55.57C419.61 60.49 427.91 70.31 435.65 73.01C441.84 73.01 451.90 72.07 458.87 71.80C465.83 71.53 475.12 71.38 482.09 71.20C489.06 71.01 498.35 70.86 505.31 70.59C512.28 70.32 521.57 69.81 528.53 69.38C535.50 68.94 544.77 67.97 551.75 67.68C558.71 67.44 568.69 67.68 574.97 67.44C582.63 64.72 598.19 51.20 598.19 51.20" fill="none" stroke="rgba(92,184,92,0.5)" stroke-width="0.9"/><path d="M40.91 35.33C40.91 35.33 57.17 35.33 64.13 35.45C71.10 35.69 80.39 36.38 87.35 36.91C94.32 37.43 103.59 38.51 110.57 38.97C117.53 39.42 127.08 38.97 133.79 39.93C141.01 41.54 149.78 47.81 157.01 49.26C163.72 49.26 173.26 49.26 180.23 49.26C187.20 49.23 196.50 49.26 203.45 49.02C210.43 48.64 219.71 47.45 226.67 46.72C233.64 45.99 242.91 44.74 249.89 44.18C256.84 43.61 266.16 43.53 273.11 42.96C280.09 42.40 289.34 40.88 296.33 40.42C303.28 39.97 312.58 39.93 319.55 39.93C326.52 39.93 335.81 40.17 342.77 40.42C349.74 40.67 359.04 41.07 365.99 41.63C372.97 42.20 382.24 43.41 389.21 44.18C396.18 44.94 405.48 45.85 412.43 46.72C419.41 47.59 428.65 49.50 435.65 49.99C442.58 49.99 451.90 49.99 458.87 49.99C465.84 49.99 475.12 49.99 482.09 49.99C489.06 49.99 498.34 49.99 505.31 49.99C512.28 49.99 521.56 49.99 528.53 49.99C535.50 49.99 544.78 49.99 551.75 49.99C558.72 49.99 568.05 49.99 574.97 49.99C581.98 49.42 598.19 46.24 598.19 46.24" fill="none" stroke="rgba(22,122,196,0.5)" stroke-width="0.9"/><path d="M40.91 55.08C40.91 55.08 57.17 54.47 64.13 54.47C71.10 54.55 80.38 55.29 87.35 55.57C94.31 55.84 103.60 56.22 110.57 56.29C117.53 56.29 126.84 56.05 133.79 56.05C140.77 56.32 150.03 57.75 157.01 58.11C163.96 58.47 173.26 58.42 180.23 58.47C187.20 58.47 196.49 58.47 203.45 58.47C210.42 58.35 219.70 57.86 226.67 57.63C233.64 57.39 242.93 57.21 249.89 56.90C256.86 56.59 266.15 56.04 273.11 55.57C280.08 55.09 289.35 54.09 296.33 53.75C303.29 53.40 312.58 53.32 319.55 53.26C326.52 53.26 335.80 53.33 342.77 53.38C349.74 53.44 359.02 53.59 365.99 53.63C372.96 53.63 382.24 53.63 389.21 53.63C396.18 53.66 405.47 53.65 412.43 53.87C419.40 54.09 428.68 54.90 435.65 55.08C442.61 55.08 451.90 55.08 458.87 55.08C465.84 55.08 475.12 55.08 482.09 55.08C489.06 55.08 498.34 55.08 505.31 55.08C512.28 55.08 521.56 55.08 528.53 55.08C535.50 55.08 544.78 55.08 551.75 55.08C558.72 55.08 568.02 55.08 574.97 55.08C581.95 54.77 598.19 53.02 598.19 53.02" fill="none" stroke="rgba(237,82,79,0.5)" stroke-width="0.9"/><path d="M40.90 19.90V24.80" stroke="rgba(92,184,92,0.9)" stroke-width="0.7"/><path d="M29.00 92.40H609.80" stroke="#333" stroke-width="0.8"/><path d="M29.30 92.40v3.300" stroke="#333" stroke-width="0.7"/><text x="40.91" y="104.00" font-size="6.6" text-anchor="middle" fill="#333">15:37:45</text><path d="M75.74 92.40v3.300" stroke="#333" stroke-width="0.7"/><text x="87.35" y="104.00" font-size="6.6" text-anchor="middle" fill="#333">15:38:15</text><path d="M122.18 92.40v3.300" stroke="#333" stroke-width="0.7"/><text x="133.79" y="104.00" font-size="6.6" text-anchor="middle" fill="#333">15:38:45</text><path d="M168.62 92.40v3.300" stroke="#333" stroke-width="0.7"/><text x="180.23" y="104.00" font-size="6.6" text-anchor="middle" fill="#333">15:39:15</text><path d="M215.06 92.40v3.300" stroke="#333" stroke-width="0.7"/><text x="226.67" y="104.00" font-size="6.6" text-anchor="middle" fill="#333">15:39:45</text><path d="M261.50 92.40v3.300" stroke="#333" stroke-width="0.7"/><text x="273.11" y="104.00" font-size="6.6" text-anchor="middle" fill="#333">15:40:15</text><path d="M307.94 92.40v3.300" stroke="#333" stroke-width="0.7"/><text x="319.55" y="104.00" font-size="6.6" text-anchor="middle" fill="#333">15:40:45</text><path d="M354.38 92.40v3.300" stroke="#333" stroke-width="0.7"/><text x="365.99" y="104.00" font-size="6.6" text-anchor="middle" fill="#333">15:41:15</text><path d="M400.82 92.40v3.300" stroke="#333" stroke-width="0.7"/><text x="412.43" y="104.00" font-size="6.6" text-anchor="middle" fill="#333">15:41:45</text><path d="M447.26 92.40v3.300" stroke="#333" stroke-width="0.7"/><text x="458.87" y="104.00" font-size="6.6" text-anchor="middle" fill="#333">15:42:15</text><path d="M493.70 92.40v3.300" stroke="#333" stroke-width="0.7"/><text x="505.31" y="104.00" font-size="6.6" text-anchor="middle" fill="#333">15:42:45</text><path d="M540.14 92.40v3.300" stroke="#333" stroke-width="0.7"/><text x="551.75" y="104.00" font-size="6.6" text-anchor="middle" fill="#333">15:43:15</text><path d="M586.58 92.40v3.300" stroke="#333" stroke-width="0.7"/><text x="598.19" y="104.00" font-size="6.6" text-anchor="middle" fill="#333">15:43:30</text><path d="M26.00 92.40h3.300" stroke="#333" stroke-width="0.7"/><text x="24.30" y="95.20" font-size="7.9" text-anchor="end" fill="#333">0</text><path d="M26.00 80.28h3.300" stroke="#333" stroke-width="0.7"/><text x="24.30" y="83.08" font-size="7.9" text-anchor="end" fill="#333">0.1</text><path d="M26.00 68.17h3.300" stroke="#333" stroke-width="0.7"/><text x="24.30" y="70.97" font-size="7.9" text-anchor="end" fill="#333">0.2</text><path d="M26.00 56.05h3.300" stroke="#333" stroke-width="0.7"/><text x="24.30" y="58.85" font-size="7.9" text-anchor="end" fill="#333">0.3</text><path d="M26.00 43.93h3.300" stroke="#333" stroke-width="0.7"/><text x="24.30" y="46.73" font-size="7.9" text-anchor="end" fill="#333">0.4</text><path d="M26.00 31.82h3.300" stroke="#333" stroke-width="0.7"/><text x="24.30" y="34.62" font-size="7.9" text-anchor="end" fill="#333">0.5</text><path d="M26.00 19.70h3.300" stroke="#333" stroke-width="0.7"/><text x="24.30" y="22.50" font-size="7.9" text-anchor="end" fill="#333">0.6</text><rect x="31.10" y="108.40" width="580.20" height="18.80" fill="#fff" stroke="#dcdcdc" stroke-width="0.7"/><path d="M31.10 123.02C31.10 123.02 68.52 123.25 93.19 123.25C97.14 123.10 98.75 120.75 102.65 120.24C110.09 119.54 114.07 119.54 121.56 119.54C125.42 119.76 127.19 121.20 131.02 121.86C134.76 122.50 136.68 122.54 140.48 122.79C148.03 123.28 151.91 123.72 159.39 123.72C163.26 123.50 164.97 121.49 168.84 121.17C177.26 121.17 181.69 121.17 190.12 121.17C194.46 121.51 196.45 123.14 200.76 123.72C204.02 123.72 205.86 123.72 209.03 123.72C212.96 122.85 214.50 120.21 218.49 119.77C226.32 119.77 230.65 119.77 238.58 120.47C242.95 121.00 244.94 123.29 249.22 123.49C252.97 123.49 254.84 121.70 258.68 121.40C264.30 121.40 267.20 121.40 272.86 121.63C278.55 121.91 281.37 122.59 287.05 122.79C291.77 122.79 294.23 122.79 298.87 122.56C302.27 122.09 303.73 120.34 307.14 120.00C314.98 119.77 319.07 119.77 327.00 119.77C328.07 119.78 328.60 119.99 329.64 120.24C332.49 120.92 333.82 121.87 336.73 122.09C344.70 122.33 348.79 122.09 356.83 122.33C362.51 122.52 365.33 123.07 371.01 123.25C376.68 123.25 379.59 123.25 385.19 123.25C389.04 122.88 391.45 122.90 394.65 120.93C399.01 118.26 399.69 113.87 404.11 111.65C407.26 111.42 409.82 111.42 413.56 111.42C417.38 111.75 419.40 112.03 423.02 113.27C426.97 114.63 428.42 117.22 432.48 117.92C439.76 118.15 443.83 118.15 451.39 118.15C459.91 117.90 464.43 118.15 472.66 116.76C476.25 116.08 477.48 113.06 480.94 112.58C484.10 112.58 485.88 113.83 489.21 114.43C491.55 114.86 492.80 114.64 495.12 115.13C499.42 116.03 501.52 116.76 505.76 117.92C511.44 119.46 514.17 121.15 519.95 121.86C525.52 121.86 528.69 121.86 534.13 121.40C540.04 120.04 542.41 116.43 548.31 115.36C553.76 115.36 556.99 115.36 562.50 116.29C568.34 117.53 570.78 120.72 576.68 121.40C586.86 121.40 592.34 121.40 602.69 120.93C606.19 120.70 611.30 119.08 611.30 119.08L611.30 127.20L31.10 127.20Z" fill="#bac8d0"/><path d="M31.10 123.02C31.10 123.02 68.52 123.25 93.19 123.25C97.14 123.10 98.75 120.75 102.65 120.24C110.09 119.54 114.07 119.54 121.56 119.54C125.42 119.76 127.19 121.20 131.02 121.86C134.76 122.50 136.68 122.54 140.48 122.79C148.03 123.28 151.91 123.72 159.39 123.72C163.26 123.50 164.97 121.49 168.84 121.17C177.26 121.17 181.69 121.17 190.12 121.17C194.46 121.51 196.45 123.14 200.76 123.72C204.02 123.72 205.86 123.72 209.03 123.72C212.96 122.85 214.50 120.21 218.49 119.77C226.32 119.77 230.65 119.77 238.58 120.47C242.95 121.00 244.94 123.29 249.22 123.49C252.97 123.49 254.84 121.70 258.68 121.40C264.30 121.40 267.20 121.40 272.86 121.63C278.55 121.91 281.37 122.59 287.05 122.79C291.77 122.79 294.23 122.79 298.87 122.56C302.27 122.09 303.73 120.34 307.14 120.00C314.98 119.77 319.07 119.77 327.00 119.77C328.07 119.78 328.60 119.99 329.64 120.24C332.49 120.92 333.82 121.87 336.73 122.09C344.70 122.33 348.79 122.09 356.83 122.33C362.51 122.52 365.33 123.07 371.01 123.25C376.68 123.25 379.59 123.25 385.19 123.25C389.04 122.88 391.45 122.90 394.65 120.93C399.01 118.26 399.69 113.87 404.11 111.65C407.26 111.42 409.82 111.42 413.56 111.42C417.38 111.75 419.40 112.03 423.02 113.27C426.97 114.63 428.42 117.22 432.48 117.92C439.76 118.15 443.83 118.15 451.39 118.15C459.91 117.90 464.43 118.15 472.66 116.76C476.25 116.08 477.48 113.06 480.94 112.58C484.10 112.58 485.88 113.83 489.21 114.43C491.55 114.86 492.80 114.64 495.12 115.13C499.42 116.03 501.52 116.76 505.76 117.92C511.44 119.46 514.17 121.15 519.95 121.86C525.52 121.86 528.69 121.86 534.13 121.40C540.04 120.04 542.41 116.43 548.31 115.36C553.76 115.36 556.99 115.36 562.50 116.29C568.34 117.53 570.78 120.72 576.68 121.40C586.86 121.40 592.34 121.40 602.69 120.93C606.19 120.70 611.30 119.08 611.30 119.08" fill="none" stroke="#8a9aa3" stroke-width="0.7"/><rect x="495.20" y="108.40" width="116.10" height="18.80" fill="rgba(0,0,0,0.2)"/><path d="M495.20 107.80v19.40M611.30 107.80v19.40" stroke="#a7b7cc" stroke-width="0.9"/><rect x="493.40" y="113.50" width="3.6" height="8.6" rx="1" fill="#a7b7cc" stroke="#8fa4c4" stroke-width="0.4"/><path d="M494.40 116.70h1.600M494.40 118.90h1.600" stroke="#fff" stroke-width="0.6"/><rect x="609.50" y="113.50" width="3.6" height="8.6" rx="1" fill="#a7b7cc" stroke="#8fa4c4" stroke-width="0.4"/><path d="M610.50 116.70h1.600M610.50 118.90h1.600" stroke="#fff" stroke-width="0.6"/></g></svg></div>
<div class="card" style="top:179px;height:132px"><svg width="622" height="132" viewBox="0 0 622 132" font-family="Liberation Sans,Noto Sans CJK SC,sans-serif"><g transform="translate(0,0.00)"><text x="3.60" y="11.30" font-size="9.3" text-anchor="start" fill="#222" font-weight="bold">CPU使用率(%)</text><path d="M248.41 10.20h16.500" stroke="rgb(22,122,196)" stroke-width="0.8" fill="none"/><circle cx="256.66" cy="10.20" r="4.1" fill="#fff" stroke="rgb(22,122,196)" stroke-width="0.8"/><text x="268.21" y="13.20" font-size="8.43" text-anchor="start" fill="#333">系统</text><path d="M292.57 10.20h16.500" stroke="rgb(237,82,79)" stroke-width="0.8" fill="none"/><circle cx="300.82" cy="10.20" r="4.1" fill="#fff" stroke="rgb(237,82,79)" stroke-width="0.8"/><text x="312.37" y="13.20" font-size="8.43" text-anchor="start" fill="#333">用户</text><path d="M336.73 10.20h16.500" stroke="rgb(92,184,92)" stroke-width="0.8" fill="none"/><circle cx="344.98" cy="10.20" r="4.1" fill="#fff" stroke="rgb(92,184,92)" stroke-width="0.8"/><text x="356.53" y="13.20" font-size="8.43" text-anchor="start" fill="#333">空闲</text><g fill="none" stroke="#404040" stroke-width="0.78" stroke-linejoin="round" stroke-linecap="butt"><path d="M544.30 4.30 h5.1 l2.4 2.500 v8.100 h-7.5z M549.40 4.30 v2.500 h2.400"/><path d="M545.90 7.50h2M545.90 9.60h4.300M545.90 11.70h4.300" stroke-width="0.8"/><path d="M560.50 9.60 l2.700 -4.900 l1.500 7.700 l1.900 -3.800 l0.800 2 h2.800"/><path d="M560.10 14.70h9.800"/><path fill="#cfcfcf" stroke-width="0.6" d="M578.60 8.60h2.100v4.200h-2.100z M581.90 6.40h2.100v6.400h-2.100z M585.30 4.40h2.200v8.400h-2.200z"/><path d="M578.10 14.70h9.800"/><path d="M600.40 5.00v7.400 M596.30 8.40l4.100 4 l4.100 -4 M596.00 12.10v2.800h8.800v-2.800"/></g><path d="M30.30 77.86H609.80" stroke="#d6d6d6" stroke-width="0.7"/><path d="M30.30 63.32H609.80" stroke="#d6d6d6" stroke-width="0.7"/><path d="M30.30 48.78H609.80" stroke="#d6d6d6" stroke-width="0.7"/><path d="M30.30 34.24H609.80" stroke="#d6d6d6" stroke-width="0.7"/><path d="M30.30 19.70H609.80" stroke="#d6d6d6" stroke-width="0.7"/><path d="M41.89 91.60C41.89 91.60 55.80 91.82 65.07 91.89C74.34 91.96 78.98 91.96 88.25 91.96C97.52 91.96 102.16 91.96 111.43 91.89C120.70 91.82 125.34 91.60 134.61 91.60C143.88 91.60 148.52 91.82 157.79 91.89C167.06 91.96 171.70 91.96 180.97 91.96C190.24 91.96 194.88 91.96 204.15 91.89C213.42 91.82 218.06 91.60 227.33 91.60C236.60 91.60 241.24 91.82 250.51 91.89C259.78 91.96 264.42 91.96 273.69 91.96C282.96 91.96 287.60 91.96 296.87 91.89C306.14 91.82 310.78 91.60 320.05 91.60C329.32 91.60 333.96 91.82 343.23 91.89C352.50 91.96 357.14 91.96 366.41 91.96C375.68 91.96 380.32 91.96 389.59 91.89C398.86 91.82 403.50 91.60 412.77 91.60C422.04 91.60 426.68 91.82 435.95 91.89C445.22 91.96 449.86 91.96 459.13 91.96C468.40 91.96 473.04 91.96 482.31 91.89C491.58 91.82 496.22 91.60 505.49 91.60C514.76 91.60 519.40 91.82 528.67 91.89C537.94 91.96 542.58 91.96 551.85 91.96C561.12 91.96 565.76 91.96 575.03 91.89C584.30 91.82 598.21 91.60 598.21 91.60L598.21 92.40L41.89 92.40Z" fill="rgba(22,122,196,0.7)"/><path d="M41.89 90.51C41.89 90.51 55.79 91.21 65.07 91.45C74.34 91.70 78.98 91.75 88.25 91.75C97.52 91.75 102.16 91.70 111.43 91.45C120.71 91.21 125.34 90.51 134.61 90.51C143.88 90.51 148.51 91.21 157.79 91.45C167.06 91.70 171.70 91.75 180.97 91.75C190.24 91.75 194.88 91.70 204.15 91.45C213.43 91.21 218.06 90.51 227.33 90.51C236.60 90.51 241.23 91.21 250.51 91.45C259.78 91.70 264.42 91.75 273.69 91.75C282.96 91.75 287.60 91.70 296.87 91.45C306.15 91.21 310.78 90.51 320.05 90.51C329.32 90.51 333.95 91.21 343.23 91.45C352.50 91.70 357.14 91.75 366.41 91.75C375.68 91.75 380.32 91.70 389.59 91.45C398.87 91.21 403.50 90.51 412.77 90.51C422.04 90.51 426.67 91.21 435.95 91.45C445.22 91.70 449.86 91.75 459.13 91.75C468.40 91.75 473.04 91.70 482.31 91.45C491.59 91.21 496.22 90.51 505.49 90.51C514.76 90.51 519.39 91.21 528.67 91.45C537.94 91.70 542.58 91.75 551.85 91.75C561.12 91.75 565.76 91.70 575.03 91.45C584.31 91.21 598.21 90.51 598.21 90.51L598.21 92.40L41.89 92.40Z" fill="rgba(237,82,79,0.7)"/><path d="M41.89 21.88C41.89 21.88 55.79 20.94 65.07 20.72C74.34 20.72 78.98 20.72 88.25 20.79C97.52 20.86 102.16 20.85 111.43 21.08C120.70 21.31 125.34 21.95 134.61 21.95C143.88 21.94 148.51 21.24 157.79 21.01C167.06 20.79 171.70 20.79 180.97 20.79C190.24 20.81 194.88 20.85 204.15 21.08C213.42 21.31 218.06 21.95 227.33 21.95C236.60 21.94 241.23 21.24 250.51 21.01C259.78 20.79 264.42 20.79 273.69 20.79C282.96 20.81 287.60 20.85 296.87 21.08C306.14 21.31 310.78 21.95 320.05 21.95C329.32 21.94 333.95 21.24 343.23 21.01C352.50 20.79 357.14 20.79 366.41 20.79C375.68 20.81 380.32 20.85 389.59 21.08C398.86 21.31 403.50 21.95 412.77 21.95C422.04 21.94 426.67 21.24 435.95 21.01C445.22 20.79 449.86 20.79 459.13 20.79C468.40 20.81 473.04 20.85 482.31 21.08C491.58 21.31 496.22 21.95 505.49 21.95C514.76 21.94 519.39 21.24 528.67 21.01C537.94 20.79 542.58 20.79 551.85 20.79C561.12 20.81 565.76 20.98 575.03 21.08C584.30 21.18 598.21 21.30 598.21 21.30L598.21 92.40L41.89 92.40Z" fill="rgba(92,184,92,0.7)"/><path d="M41.89 91.60C41.89 91.60 55.80 91.82 65.07 91.89C74.34 91.96 78.98 91.96 88.25 91.96C97.52 91.96 102.16 91.96 111.43 91.89C120.70 91.82 125.34 91.60 134.61 91.60C143.88 91.60 148.52 91.82 157.79 91.89C167.06 91.96 171.70 91.96 180.97 91.96C190.24 91.96 194.88 91.96 204.15 91.89C213.42 91.82 218.06 91.60 227.33 91.60C236.60 91.60 241.24 91.82 250.51 91.89C259.78 91.96 264.42 91.96 273.69 91.96C282.96 91.96 287.60 91.96 296.87 91.89C306.14 91.82 310.78 91.60 320.05 91.60C329.32 91.60 333.96 91.82 343.23 91.89C352.50 91.96 357.14 91.96 366.41 91.96C375.68 91.96 380.32 91.96 389.59 91.89C398.86 91.82 403.50 91.60 412.77 91.60C422.04 91.60 426.68 91.82 435.95 91.89C445.22 91.96 449.86 91.96 459.13 91.96C468.40 91.96 473.04 91.96 482.31 91.89C491.58 91.82 496.22 91.60 505.49 91.60C514.76 91.60 519.40 91.82 528.67 91.89C537.94 91.96 542.58 91.96 551.85 91.96C561.12 91.96 565.76 91.96 575.03 91.89C584.30 91.82 598.21 91.60 598.21 91.60" fill="none" stroke="rgba(22,122,196,0.5)" stroke-width="0.9"/><path d="M41.89 90.51C41.89 90.51 55.79 91.21 65.07 91.45C74.34 91.70 78.98 91.75 88.25 91.75C97.52 91.75 102.16 91.70 111.43 91.45C120.71 91.21 125.34 90.51 134.61 90.51C143.88 90.51 148.51 91.21 157.79 91.45C167.06 91.70 171.70 91.75 180.97 91.75C190.24 91.75 194.88 91.70 204.15 91.45C213.43 91.21 218.06 90.51 227.33 90.51C236.60 90.51 241.23 91.21 250.51 91.45C259.78 91.70 264.42 91.75 273.69 91.75C282.96 91.75 287.60 91.70 296.87 91.45C306.15 91.21 310.78 90.51 320.05 90.51C329.32 90.51 333.95 91.21 343.23 91.45C352.50 91.70 357.14 91.75 366.41 91.75C375.68 91.75 380.32 91.70 389.59 91.45C398.87 91.21 403.50 90.51 412.77 90.51C422.04 90.51 426.67 91.21 435.95 91.45C445.22 91.70 449.86 91.75 459.13 91.75C468.40 91.75 473.04 91.70 482.31 91.45C491.59 91.21 496.22 90.51 505.49 90.51C514.76 90.51 519.39 91.21 528.67 91.45C537.94 91.70 542.58 91.75 551.85 91.75C561.12 91.75 565.76 91.70 575.03 91.45C584.31 91.21 598.21 90.51 598.21 90.51" fill="none" stroke="rgba(237,82,79,0.5)" stroke-width="0.9"/><path d="M41.89 21.88C41.89 21.88 55.79 20.94 65.07 20.72C74.34 20.72 78.98 20.72 88.25 20.79C97.52 20.86 102.16 20.85 111.43 21.08C120.70 21.31 125.34 21.95 134.61 21.95C143.88 21.94 148.51 21.24 157.79 21.01C167.06 20.79 171.70 20.79 180.97 20.79C190.24 20.81 194.88 20.85 204.15 21.08C213.42 21.31 218.06 21.95 227.33 21.95C236.60 21.94 241.23 21.24 250.51 21.01C259.78 20.79 264.42 20.79 273.69 20.79C282.96 20.81 287.60 20.85 296.87 21.08C306.14 21.31 310.78 21.95 320.05 21.95C329.32 21.94 333.95 21.24 343.23 21.01C352.50 20.79 357.14 20.79 366.41 20.79C375.68 20.81 380.32 20.85 389.59 21.08C398.86 21.31 403.50 21.95 412.77 21.95C422.04 21.94 426.67 21.24 435.95 21.01C445.22 20.79 449.86 20.79 459.13 20.79C468.40 20.81 473.04 20.85 482.31 21.08C491.58 21.31 496.22 21.95 505.49 21.95C514.76 21.94 519.39 21.24 528.67 21.01C537.94 20.79 542.58 20.79 551.85 20.79C561.12 20.81 565.76 20.98 575.03 21.08C584.30 21.18 598.21 21.30 598.21 21.30" fill="none" stroke="rgba(92,184,92,0.5)" stroke-width="0.9"/><path d="M30.00 92.40H609.80" stroke="#333" stroke-width="0.8"/><path d="M30.30 92.40v3.300" stroke="#333" stroke-width="0.7"/><text x="41.89" y="104.00" font-size="6.6" text-anchor="middle" fill="#333">15:37:45</text><path d="M76.66 92.40v3.300" stroke="#333" stroke-width="0.7"/><text x="88.25" y="104.00" font-size="6.6" text-anchor="middle" fill="#333">15:38:15</text><path d="M123.02 92.40v3.300" stroke="#333" stroke-width="0.7"/><text x="134.61" y="104.00" font-size="6.6" text-anchor="middle" fill="#333">15:38:45</text><path d="M169.38 92.40v3.300" stroke="#333" stroke-width="0.7"/><text x="180.97" y="104.00" font-size="6.6" text-anchor="middle" fill="#333">15:39:15</text><path d="M215.74 92.40v3.300" stroke="#333" stroke-width="0.7"/><text x="227.33" y="104.00" font-size="6.6" text-anchor="middle" fill="#333">15:39:45</text><path d="M262.10 92.40v3.300" stroke="#333" stroke-width="0.7"/><text x="273.69" y="104.00" font-size="6.6" text-anchor="middle" fill="#333">15:40:15</text><path d="M308.46 92.40v3.300" stroke="#333" stroke-width="0.7"/><text x="320.05" y="104.00" font-size="6.6" text-anchor="middle" fill="#333">15:40:45</text><path d="M354.82 92.40v3.300" stroke="#333" stroke-width="0.7"/><text x="366.41" y="104.00" font-size="6.6" text-anchor="middle" fill="#333">15:41:15</text><path d="M401.18 92.40v3.300" stroke="#333" stroke-width="0.7"/><text x="412.77" y="104.00" font-size="6.6" text-anchor="middle" fill="#333">15:41:45</text><path d="M447.54 92.40v3.300" stroke="#333" stroke-width="0.7"/><text x="459.13" y="104.00" font-size="6.6" text-anchor="middle" fill="#333">15:42:15</text><path d="M493.90 92.40v3.300" stroke="#333" stroke-width="0.7"/><text x="505.49" y="104.00" font-size="6.6" text-anchor="middle" fill="#333">15:42:45</text><path d="M540.26 92.40v3.300" stroke="#333" stroke-width="0.7"/><text x="551.85" y="104.00" font-size="6.6" text-anchor="middle" fill="#333">15:43:15</text><path d="M586.62 92.40v3.300" stroke="#333" stroke-width="0.7"/><text x="598.21" y="104.00" font-size="6.6" text-anchor="middle" fill="#333">15:43:30</text><path d="M27.00 92.40h3.300" stroke="#333" stroke-width="0.7"/><text x="25.30" y="95.20" font-size="7.9" text-anchor="end" fill="#333">0</text><path d="M27.00 77.86h3.300" stroke="#333" stroke-width="0.7"/><text x="25.30" y="80.66" font-size="7.9" text-anchor="end" fill="#333">20</text><path d="M27.00 63.32h3.300" stroke="#333" stroke-width="0.7"/><text x="25.30" y="66.12" font-size="7.9" text-anchor="end" fill="#333">40</text><path d="M27.00 48.78h3.300" stroke="#333" stroke-width="0.7"/><text x="25.30" y="51.58" font-size="7.9" text-anchor="end" fill="#333">60</text><path d="M27.00 34.24h3.300" stroke="#333" stroke-width="0.7"/><text x="25.30" y="37.04" font-size="7.9" text-anchor="end" fill="#333">80</text><path d="M27.00 19.70h3.300" stroke="#333" stroke-width="0.7"/><text x="25.30" y="22.50" font-size="7.9" text-anchor="end" fill="#333">100</text><rect x="32.10" y="108.40" width="579.20" height="18.80" fill="#fff" stroke="#dcdcdc" stroke-width="0.7"/><path d="M32.10 121.76L45.91 120.18L50.64 121.76L57.73 121.54L66.01 119.05L76.65 118.82L84.92 116.55L100.29 117.01L110.92 120.63L123.93 118.37L128.65 119.95L136.93 119.73L142.84 118.14L149.93 119.27L162.93 117.69L175.94 121.31L185.39 118.14L197.21 119.27L205.49 118.37L214.94 121.54L224.40 117.46L233.86 120.63L242.13 118.82L255.13 115.87L261.04 116.33L265.77 117.91L272.86 118.37L278.77 117.69L283.50 119.95L290.59 119.50L298.87 116.78L302.41 117.23L311.87 123.58L321.33 119.50L319.00 119.73L328.46 121.08L335.55 118.82L352.10 119.05L361.55 121.76L368.65 121.54L375.74 119.73L394.65 117.91L408.83 121.76L418.29 120.63L427.75 121.08L437.20 112.25L446.66 117.01L456.12 113.84L470.30 114.29L476.21 112.48L486.85 123.80L495.12 121.08L498.67 119.27L508.13 120.18L514.04 113.38L524.67 121.54L532.95 114.74L543.59 119.73L548.31 119.73L553.04 114.74L566.04 121.54L573.14 114.29L586.14 121.54L592.05 115.65L601.51 121.54L611.30 121.54L611.30 127.20L32.10 127.20Z" fill="#bac8d0"/><path d="M32.10 121.76L45.91 120.18L50.64 121.76L57.73 121.54L66.01 119.05L76.65 118.82L84.92 116.55L100.29 117.01L110.92 120.63L123.93 118.37L128.65 119.95L136.93 119.73L142.84 118.14L149.93 119.27L162.93 117.69L175.94 121.31L185.39 118.14L197.21 119.27L205.49 118.37L214.94 121.54L224.40 117.46L233.86 120.63L242.13 118.82L255.13 115.87L261.04 116.33L265.77 117.91L272.86 118.37L278.77 117.69L283.50 119.95L290.59 119.50L298.87 116.78L302.41 117.23L311.87 123.58L321.33 119.50L319.00 119.73L328.46 121.08L335.55 118.82L352.10 119.05L361.55 121.76L368.65 121.54L375.74 119.73L394.65 117.91L408.83 121.76L418.29 120.63L427.75 121.08L437.20 112.25L446.66 117.01L456.12 113.84L470.30 114.29L476.21 112.48L486.85 123.80L495.12 121.08L498.67 119.27L508.13 120.18L514.04 113.38L524.67 121.54L532.95 114.74L543.59 119.73L548.31 119.73L553.04 114.74L566.04 121.54L573.14 114.29L586.14 121.54L592.05 115.65L601.51 121.54L611.30 121.54" fill="none" stroke="#8a9aa3" stroke-width="0.7"/><rect x="495.20" y="108.40" width="116.10" height="18.80" fill="rgba(0,0,0,0.2)"/><path d="M495.20 107.80v19.40M611.30 107.80v19.40" stroke="#a7b7cc" stroke-width="0.9"/><rect x="493.40" y="113.50" width="3.6" height="8.6" rx="1" fill="#a7b7cc" stroke="#8fa4c4" stroke-width="0.4"/><path d="M494.40 116.70h1.600M494.40 118.90h1.600" stroke="#fff" stroke-width="0.6"/><rect x="609.50" y="113.50" width="3.6" height="8.6" rx="1" fill="#a7b7cc" stroke="#8fa4c4" stroke-width="0.4"/><path d="M610.50 116.70h1.600M610.50 118.90h1.600" stroke="#fff" stroke-width="0.6"/></g></svg></div>
<div class="card" style="top:324px;height:132px"><svg width="622" height="132" viewBox="0 0 622 132" font-family="Liberation Sans,Noto Sans CJK SC,sans-serif"><g transform="translate(0,0.60)"><text x="3.60" y="11.30" font-size="9.3" text-anchor="start" fill="#222" font-weight="bold">内存(GB)</text><path d="M204.25 10.20h16.500" stroke="rgb(22,122,196)" stroke-width="0.8" fill="none"/><circle cx="212.50" cy="10.20" r="4.1" fill="#fff" stroke="rgb(22,122,196)" stroke-width="0.8"/><text x="224.05" y="13.20" font-size="8.43" text-anchor="start" fill="#333">总量</text><path d="M248.41 10.20h16.500" stroke="rgb(92,184,92)" stroke-width="0.8" fill="none"/><circle cx="256.66" cy="10.20" r="4.1" fill="#fff" stroke="rgb(92,184,92)" stroke-width="0.8"/><text x="268.21" y="13.20" font-size="8.43" text-anchor="start" fill="#333">剩余</text><path d="M292.57 10.20h16.500" stroke="rgb(240,173,78)" stroke-width="0.8" fill="none"/><circle cx="300.82" cy="10.20" r="4.1" fill="#fff" stroke="rgb(240,173,78)" stroke-width="0.8"/><text x="312.37" y="13.20" font-size="8.43" text-anchor="start" fill="#333">共享</text><path d="M336.73 10.20h16.500" stroke="rgb(176,190,197)" stroke-width="0.8" fill="none"/><circle cx="344.98" cy="10.20" r="4.1" fill="#fff" stroke="rgb(176,190,197)" stroke-width="0.8"/><text x="356.53" y="13.20" font-size="8.43" text-anchor="start" fill="#333">缓冲</text><path d="M380.89 10.20h16.500" stroke="rgb(237,82,79)" stroke-width="0.8" fill="none"/><circle cx="389.14" cy="10.20" r="4.1" fill="#fff" stroke="rgb(237,82,79)" stroke-width="0.8"/><text x="400.69" y="13.20" font-size="8.43" text-anchor="start" fill="#333">缓存</text><g fill="none" stroke="#404040" stroke-width="0.78" stroke-linejoin="round" stroke-linecap="butt"><path d="M544.30 4.30 h5.1 l2.4 2.500 v8.100 h-7.5z M549.40 4.30 v2.500 h2.400"/><path d="M545.90 7.50h2M545.90 9.60h4.300M545.90 11.70h4.300" stroke-width="0.8"/><path d="M560.50 9.60 l2.700 -4.900 l1.500 7.700 l1.900 -3.800 l0.800 2 h2.800"/><path d="M560.10 14.70h9.800"/><path fill="#cfcfcf" stroke-width="0.6" d="M578.60 8.60h2.100v4.200h-2.100z M581.90 6.40h2.100v6.400h-2.100z M585.30 4.40h2.200v8.400h-2.200z"/><path d="M578.10 14.70h9.800"/><path d="M600.40 5.00v7.400 M596.30 8.40l4.100 4 l4.100 -4 M596.00 12.10v2.800h8.800v-2.800"/></g><path d="M25.70 77.86H609.80" stroke="#d6d6d6" stroke-width="0.7"/><path d="M25.70 63.32H609.80" stroke="#d6d6d6" stroke-width="0.7"/><path d="M25.70 48.78H609.80" stroke="#d6d6d6" stroke-width="0.7"/><path d="M25.70 34.24H609.80" stroke="#d6d6d6" stroke-width="0.7"/><path d="M25.70 19.70H609.80" stroke="#d6d6d6" stroke-width="0.7"/><path d="M37.38 23.34L60.75 23.34L84.11 23.34L107.47 23.34L130.84 23.34L154.20 23.34L177.57 23.34L200.93 23.34L224.29 23.34L247.66 23.34L271.02 23.34L294.39 23.34L317.75 23.34L341.11 23.34L364.48 23.34L387.84 23.34L411.21 23.34L434.57 23.34L457.93 23.34L481.30 23.34L504.66 23.34L528.03 23.34L551.39 23.34L574.75 23.34L598.12 23.34L598.12 92.40L37.38 92.40Z" fill="rgba(22,122,196,0.7)"/><path d="M37.38 46.60L60.75 46.60L84.11 46.60L107.47 46.60L130.84 46.60L154.20 46.60L177.57 46.60L200.93 46.60L224.29 46.60L247.66 46.60L271.02 46.60L294.39 46.60L317.75 46.60L341.11 46.60L364.48 46.60L387.84 46.60L411.21 46.60L434.57 46.60L457.93 46.60L481.30 46.60L504.66 46.60L528.03 46.60L551.39 46.60L574.75 46.60L598.12 46.60L598.12 92.40L37.38 92.40Z" fill="rgba(92,184,92,0.7)"/><path d="M37.38 77.86L60.75 77.86L84.11 77.86L107.47 77.86L130.84 77.86L154.20 77.86L177.57 77.86L200.93 77.86L224.29 77.86L247.66 77.86L271.02 77.86L294.39 77.86L317.75 77.86L341.11 77.86L364.48 77.86L387.84 77.86L411.21 77.86L434.57 77.86L457.93 77.86L481.30 77.86L504.66 77.86L528.03 77.86L551.39 77.86L574.75 77.86L598.12 77.86L598.12 92.40L37.38 92.40Z" fill="rgba(237,82,79,0.7)"/><path d="M37.38 23.34L60.75 23.34L84.11 23.34L107.47 23.34L130.84 23.34L154.20 23.34L177.57 23.34L200.93 23.34L224.29 23.34L247.66 23.34L271.02 23.34L294.39 23.34L317.75 23.34L341.11 23.34L364.48 23.34L387.84 23.34L411.21 23.34L434.57 23.34L457.93 23.34L481.30 23.34L504.66 23.34L528.03 23.34L551.39 23.34L574.75 23.34L598.12 23.34" fill="none" stroke="rgba(22,122,196,0.5)" stroke-width="0.9"/><path d="M37.38 46.60L60.75 46.60L84.11 46.60L107.47 46.60L130.84 46.60L154.20 46.60L177.57 46.60L200.93 46.60L224.29 46.60L247.66 46.60L271.02 46.60L294.39 46.60L317.75 46.60L341.11 46.60L364.48 46.60L387.84 46.60L411.21 46.60L434.57 46.60L457.93 46.60L481.30 46.60L504.66 46.60L528.03 46.60L551.39 46.60L574.75 46.60L598.12 46.60" fill="none" stroke="rgba(92,184,92,0.5)" stroke-width="0.9"/><path d="M37.38 77.86L60.75 77.86L84.11 77.86L107.47 77.86L130.84 77.86L154.20 77.86L177.57 77.86L200.93 77.86L224.29 77.86L247.66 77.86L271.02 77.86L294.39 77.86L317.75 77.86L341.11 77.86L364.48 77.86L387.84 77.86L411.21 77.86L434.57 77.86L457.93 77.86L481.30 77.86L504.66 77.86L528.03 77.86L551.39 77.86L574.75 77.86L598.12 77.86" fill="none" stroke="rgba(237,82,79,0.5)" stroke-width="0.9"/><path d="M25.40 92.40H609.80" stroke="#333" stroke-width="0.8"/><path d="M25.70 92.40v3.300" stroke="#333" stroke-width="0.7"/><text x="37.38" y="104.00" font-size="6.6" text-anchor="middle" fill="#333">15:37:45</text><path d="M72.43 92.40v3.300" stroke="#333" stroke-width="0.7"/><text x="84.11" y="104.00" font-size="6.6" text-anchor="middle" fill="#333">15:38:15</text><path d="M119.16 92.40v3.300" stroke="#333" stroke-width="0.7"/><text x="130.84" y="104.00" font-size="6.6" text-anchor="middle" fill="#333">15:38:45</text><path d="M165.88 92.40v3.300" stroke="#333" stroke-width="0.7"/><text x="177.57" y="104.00" font-size="6.6" text-anchor="middle" fill="#333">15:39:15</text><path d="M212.61 92.40v3.300" stroke="#333" stroke-width="0.7"/><text x="224.29" y="104.00" font-size="6.6" text-anchor="middle" fill="#333">15:39:45</text><path d="M259.34 92.40v3.300" stroke="#333" stroke-width="0.7"/><text x="271.02" y="104.00" font-size="6.6" text-anchor="middle" fill="#333">15:40:15</text><path d="M306.07 92.40v3.300" stroke="#333" stroke-width="0.7"/><text x="317.75" y="104.00" font-size="6.6" text-anchor="middle" fill="#333">15:40:45</text><path d="M352.80 92.40v3.300" stroke="#333" stroke-width="0.7"/><text x="364.48" y="104.00" font-size="6.6" text-anchor="middle" fill="#333">15:41:15</text><path d="M399.52 92.40v3.300" stroke="#333" stroke-width="0.7"/><text x="411.21" y="104.00" font-size="6.6" text-anchor="middle" fill="#333">15:41:45</text><path d="M446.25 92.40v3.300" stroke="#333" stroke-width="0.7"/><text x="457.93" y="104.00" font-size="6.6" text-anchor="middle" fill="#333">15:42:15</text><path d="M492.98 92.40v3.300" stroke="#333" stroke-width="0.7"/><text x="504.66" y="104.00" font-size="6.6" text-anchor="middle" fill="#333">15:42:45</text><path d="M539.71 92.40v3.300" stroke="#333" stroke-width="0.7"/><text x="551.39" y="104.00" font-size="6.6" text-anchor="middle" fill="#333">15:43:15</text><path d="M586.44 92.40v3.300" stroke="#333" stroke-width="0.7"/><text x="598.12" y="104.00" font-size="6.6" text-anchor="middle" fill="#333">15:43:30</text><path d="M22.40 92.40h3.300" stroke="#333" stroke-width="0.7"/><text x="20.70" y="95.20" font-size="7.9" text-anchor="end" fill="#333">0</text><path d="M22.40 77.86h3.300" stroke="#333" stroke-width="0.7"/><text x="20.70" y="80.66" font-size="7.9" text-anchor="end" fill="#333">2</text><path d="M22.40 63.32h3.300" stroke="#333" stroke-width="0.7"/><text x="20.70" y="66.12" font-size="7.9" text-anchor="end" fill="#333">4</text><path d="M22.40 48.78h3.300" stroke="#333" stroke-width="0.7"/><text x="20.70" y="51.58" font-size="7.9" text-anchor="end" fill="#333">6</text><path d="M22.40 34.24h3.300" stroke="#333" stroke-width="0.7"/><text x="20.70" y="37.04" font-size="7.9" text-anchor="end" fill="#333">8</text><path d="M22.40 19.70h3.300" stroke="#333" stroke-width="0.7"/><text x="20.70" y="22.50" font-size="7.9" text-anchor="end" fill="#333">10</text><rect x="27.50" y="108.40" width="583.80" height="18.80" fill="#fff" stroke="#dcdcdc" stroke-width="0.7"/><path d="M27.50 118.18L611.30 118.18L611.30 127.20L27.50 127.20Z" fill="#bac8d0"/><path d="M27.50 118.18L611.30 118.18" fill="none" stroke="#8a9aa3" stroke-width="0.7"/><rect x="495.20" y="108.40" width="116.10" height="18.80" fill="rgba(0,0,0,0.2)"/><path d="M495.20 107.80v19.40M611.30 107.80v19.40" stroke="#a7b7cc" stroke-width="0.9"/><rect x="493.40" y="113.50" width="3.6" height="8.6" rx="1" fill="#a7b7cc" stroke="#8fa4c4" stroke-width="0.4"/><path d="M494.40 116.70h1.600M494.40 118.90h1.600" stroke="#fff" stroke-width="0.6"/><rect x="609.50" y="113.50" width="3.6" height="8.6" rx="1" fill="#a7b7cc" stroke="#8fa4c4" stroke-width="0.4"/><path d="M610.50 116.70h1.600M610.50 118.90h1.600" stroke="#fff" stroke-width="0.6"/></g></svg></div>
<div class="card" style="top:470px;height:132px"><svg width="622" height="132" viewBox="0 0 622 132" font-family="Liberation Sans,Noto Sans CJK SC,sans-serif"><g transform="translate(0,0.50)"><text x="3.60" y="11.30" font-size="9.3" text-anchor="start" fill="#222" font-weight="bold">网络(KB/s)</text><path d="M245.20 10.20h16.500" stroke="rgb(190,200,207)" stroke-width="0.8" fill="none"/><circle cx="253.45" cy="10.20" r="4.1" fill="#fff" stroke="rgb(190,200,207)" stroke-width="0.8"/><text x="265.00" y="13.20" font-size="8.43" text-anchor="start" fill="#333">接收千字节</text><path d="M314.65 10.20h16.500" stroke="rgb(69,90,100)" stroke-width="0.8" fill="none"/><circle cx="322.90" cy="10.20" r="4.1" fill="#fff" stroke="rgb(69,90,100)" stroke-width="0.8"/><text x="334.45" y="13.20" font-size="8.43" text-anchor="start" fill="#333">发送千字节</text><g fill="none" stroke="#404040" stroke-width="0.78" stroke-linejoin="round" stroke-linecap="butt"><path d="M544.30 4.30 h5.1 l2.4 2.500 v8.100 h-7.5z M549.40 4.30 v2.500 h2.400"/><path d="M545.90 7.50h2M545.90 9.60h4.300M545.90 11.70h4.300" stroke-width="0.8"/><path d="M560.50 9.60 l2.700 -4.900 l1.500 7.700 l1.900 -3.800 l0.800 2 h2.800"/><path d="M560.10 14.70h9.800"/><path fill="#cfcfcf" stroke-width="0.6" d="M578.60 8.60h2.100v4.200h-2.100z M581.90 6.40h2.100v6.400h-2.100z M585.30 4.40h2.200v8.400h-2.200z"/><path d="M578.10 14.70h9.800"/><path d="M600.40 5.00v7.400 M596.30 8.40l4.100 4 l4.100 -4 M596.00 12.10v2.800h8.800v-2.800"/></g><path d="M31.30 77.86H609.80" stroke="#d6d6d6" stroke-width="0.7"/><path d="M31.30 63.32H609.80" stroke="#d6d6d6" stroke-width="0.7"/><path d="M31.30 48.78H609.80" stroke="#d6d6d6" stroke-width="0.7"/><path d="M31.30 34.24H609.80" stroke="#d6d6d6" stroke-width="0.7"/><path d="M31.30 19.70H609.80" stroke="#d6d6d6" stroke-width="0.7"/><path d="M43.60 92.20C43.60 92.20 190.16 92.20 239.00 92.20C242.13 92.19 248.98 92.20 251.50 91.40C254.91 89.46 260.33 82.19 262.70 78.70C267.41 71.76 275.62 57.00 279.80 49.70C282.22 45.48 286.53 36.72 289.10 32.60C290.83 29.82 294.43 23.54 297.00 22.10C299.15 22.00 305.25 22.00 308.00 22.00C311.00 22.00 317.71 22.00 320.00 22.10C322.03 23.19 324.42 28.82 325.30 31.30C327.22 36.72 329.72 48.10 331.20 53.70C332.85 59.95 335.84 72.55 337.80 78.70C338.82 81.90 340.87 89.24 343.10 91.10C344.92 92.20 351.26 92.19 354.00 92.20C414.86 92.20 597.50 92.20 597.50 92.20L597.50 92.40L43.60 92.40Z" fill="rgba(176,188,196,0.7)"/><path d="M42.87 91.09C42.87 91.09 59.07 91.09 66.01 91.09C72.95 91.09 82.21 91.09 89.15 91.09C96.09 91.09 105.35 91.09 112.29 91.09C119.23 91.09 128.49 91.09 135.43 91.09C142.37 91.09 151.63 91.09 158.57 91.09C165.51 91.09 174.77 91.09 181.71 91.09C188.65 91.09 197.91 91.09 204.85 91.09C211.79 91.09 221.05 91.09 227.99 91.09C234.93 91.09 244.19 91.09 251.13 91.09C258.07 91.09 267.33 91.09 274.27 91.09C281.21 91.09 290.47 91.09 297.41 91.09C304.35 91.09 313.61 91.09 320.55 91.09C327.49 91.09 336.75 91.09 343.69 91.09C350.63 91.09 359.89 91.09 366.83 91.09C373.77 91.09 383.03 91.09 389.97 91.09C396.91 91.09 406.17 91.09 413.11 91.09C420.05 91.09 429.31 91.09 436.25 91.09C443.19 91.09 452.45 91.09 459.39 91.09C466.33 91.09 475.59 91.09 482.53 91.09C489.47 91.09 498.73 91.09 505.67 91.09C512.61 91.09 521.87 91.09 528.81 91.09C535.75 91.09 545.01 91.09 551.95 91.09C558.89 91.03 568.17 91.09 575.09 90.66C582.06 90.17 598.23 87.89 598.23 87.89L598.23 92.40L42.87 92.40Z" fill="rgba(69,90,100,0.85)"/><path d="M43.60 92.20C43.60 92.20 190.16 92.20 239.00 92.20C242.13 92.19 248.98 92.20 251.50 91.40C254.91 89.46 260.33 82.19 262.70 78.70C267.41 71.76 275.62 57.00 279.80 49.70C282.22 45.48 286.53 36.72 289.10 32.60C290.83 29.82 294.43 23.54 297.00 22.10C299.15 22.00 305.25 22.00 308.00 22.00C311.00 22.00 317.71 22.00 320.00 22.10C322.03 23.19 324.42 28.82 325.30 31.30C327.22 36.72 329.72 48.10 331.20 53.70C332.85 59.95 335.84 72.55 337.80 78.70C338.82 81.90 340.87 89.24 343.10 91.10C344.92 92.20 351.26 92.19 354.00 92.20C414.86 92.20 597.50 92.20 597.50 92.20" fill="none" stroke="rgba(176,188,196,0.5)" stroke-width="0.9"/><path d="M42.87 91.09C42.87 91.09 59.07 91.09 66.01 91.09C72.95 91.09 82.21 91.09 89.15 91.09C96.09 91.09 105.35 91.09 112.29 91.09C119.23 91.09 128.49 91.09 135.43 91.09C142.37 91.09 151.63 91.09 158.57 91.09C165.51 91.09 174.77 91.09 181.71 91.09C188.65 91.09 197.91 91.09 204.85 91.09C211.79 91.09 221.05 91.09 227.99 91.09C234.93 91.09 244.19 91.09 251.13 91.09C258.07 91.09 267.33 91.09 274.27 91.09C281.21 91.09 290.47 91.09 297.41 91.09C304.35 91.09 313.61 91.09 320.55 91.09C327.49 91.09 336.75 91.09 343.69 91.09C350.63 91.09 359.89 91.09 366.83 91.09C373.77 91.09 383.03 91.09 389.97 91.09C396.91 91.09 406.17 91.09 413.11 91.09C420.05 91.09 429.31 91.09 436.25 91.09C443.19 91.09 452.45 91.09 459.39 91.09C466.33 91.09 475.59 91.09 482.53 91.09C489.47 91.09 498.73 91.09 505.67 91.09C512.61 91.09 521.87 91.09 528.81 91.09C535.75 91.09 545.01 91.09 551.95 91.09C558.89 91.03 568.17 91.09 575.09 90.66C582.06 90.17 598.23 87.89 598.23 87.89" fill="none" stroke="rgba(69,90,100,0.5)" stroke-width="0.9"/><path d="M31.00 92.40H609.80" stroke="#333" stroke-width="0.8"/><path d="M31.30 92.40v3.300" stroke="#333" stroke-width="0.7"/><text x="42.87" y="104.00" font-size="6.6" text-anchor="middle" fill="#333">15:37:45</text><path d="M77.58 92.40v3.300" stroke="#333" stroke-width="0.7"/><text x="89.15" y="104.00" font-size="6.6" text-anchor="middle" fill="#333">15:38:15</text><path d="M123.86 92.40v3.300" stroke="#333" stroke-width="0.7"/><text x="135.43" y="104.00" font-size="6.6" text-anchor="middle" fill="#333">15:38:45</text><path d="M170.14 92.40v3.300" stroke="#333" stroke-width="0.7"/><text x="181.71" y="104.00" font-size="6.6" text-anchor="middle" fill="#333">15:39:15</text><path d="M216.42 92.40v3.300" stroke="#333" stroke-width="0.7"/><text x="227.99" y="104.00" font-size="6.6" text-anchor="middle" fill="#333">15:39:45</text><path d="M262.70 92.40v3.300" stroke="#333" stroke-width="0.7"/><text x="274.27" y="104.00" font-size="6.6" text-anchor="middle" fill="#333">15:40:15</text><path d="M308.98 92.40v3.300" stroke="#333" stroke-width="0.7"/><text x="320.55" y="104.00" font-size="6.6" text-anchor="middle" fill="#333">15:40:45</text><path d="M355.26 92.40v3.300" stroke="#333" stroke-width="0.7"/><text x="366.83" y="104.00" font-size="6.6" text-anchor="middle" fill="#333">15:41:15</text><path d="M401.54 92.40v3.300" stroke="#333" stroke-width="0.7"/><text x="413.11" y="104.00" font-size="6.6" text-anchor="middle" fill="#333">15:41:45</text><path d="M447.82 92.40v3.300" stroke="#333" stroke-width="0.7"/><text x="459.39" y="104.00" font-size="6.6" text-anchor="middle" fill="#333">15:42:15</text><path d="M494.10 92.40v3.300" stroke="#333" stroke-width="0.7"/><text x="505.67" y="104.00" font-size="6.6" text-anchor="middle" fill="#333">15:42:45</text><path d="M540.38 92.40v3.300" stroke="#333" stroke-width="0.7"/><text x="551.95" y="104.00" font-size="6.6" text-anchor="middle" fill="#333">15:43:15</text><path d="M586.66 92.40v3.300" stroke="#333" stroke-width="0.7"/><text x="598.23" y="104.00" font-size="6.6" text-anchor="middle" fill="#333">15:43:30</text><path d="M28.00 92.40h3.300" stroke="#333" stroke-width="0.7"/><text x="26.30" y="95.20" font-size="7.9" text-anchor="end" fill="#333">0</text><path d="M28.00 77.86h3.300" stroke="#333" stroke-width="0.7"/><text x="26.30" y="80.66" font-size="7.9" text-anchor="end" fill="#333">100</text><path d="M28.00 63.32h3.300" stroke="#333" stroke-width="0.7"/><text x="26.30" y="66.12" font-size="7.9" text-anchor="end" fill="#333">200</text><path d="M28.00 48.78h3.300" stroke="#333" stroke-width="0.7"/><text x="26.30" y="51.58" font-size="7.9" text-anchor="end" fill="#333">300</text><path d="M28.00 34.24h3.300" stroke="#333" stroke-width="0.7"/><text x="26.30" y="37.04" font-size="7.9" text-anchor="end" fill="#333">400</text><path d="M28.00 19.70h3.300" stroke="#333" stroke-width="0.7"/><text x="26.30" y="22.50" font-size="7.9" text-anchor="end" fill="#333">500</text><rect x="33.10" y="108.40" width="578.20" height="18.80" fill="#fff" stroke="#dcdcdc" stroke-width="0.7"/><path d="M33.10 111.16L46.91 111.16L51.95 112.41L58.25 115.42L64.56 115.67L72.12 119.93L78.43 120.93L87.25 124.19L154.07 124.19L163.40 111.66L172.98 124.19L244.84 124.19L251.14 117.17L254.93 114.92L258.71 115.92L263.75 119.68L270.05 120.43L278.88 123.94L318.97 123.94L345.82 123.94L354.65 111.41L432.81 111.41L439.11 112.91L444.16 114.92L451.72 115.42L456.76 119.93L464.33 120.93L471.89 123.94L538.71 123.94L547.54 111.16L553.84 111.16L558.88 123.94L611.30 123.94L611.30 127.20L33.10 127.20Z" fill="#bac8d0"/><path d="M33.10 111.16L46.91 111.16L51.95 112.41L58.25 115.42L64.56 115.67L72.12 119.93L78.43 120.93L87.25 124.19L154.07 124.19L163.40 111.66L172.98 124.19L244.84 124.19L251.14 117.17L254.93 114.92L258.71 115.92L263.75 119.68L270.05 120.43L278.88 123.94L318.97 123.94L345.82 123.94L354.65 111.41L432.81 111.41L439.11 112.91L444.16 114.92L451.72 115.42L456.76 119.93L464.33 120.93L471.89 123.94L538.71 123.94L547.54 111.16L553.84 111.16L558.88 123.94L611.30 123.94" fill="none" stroke="#8a9aa3" stroke-width="0.7"/><rect x="495.20" y="108.40" width="116.10" height="18.80" fill="rgba(0,0,0,0.2)"/><path d="M495.20 107.80v19.40M611.30 107.80v19.40" stroke="#a7b7cc" stroke-width="0.9"/><rect x="493.40" y="113.50" width="3.6" height="8.6" rx="1" fill="#a7b7cc" stroke="#8fa4c4" stroke-width="0.4"/><path d="M494.40 116.70h1.600M494.40 118.90h1.600" stroke="#fff" stroke-width="0.6"/><rect x="609.50" y="113.50" width="3.6" height="8.6" rx="1" fill="#a7b7cc" stroke="#8fa4c4" stroke-width="0.4"/><path d="M610.50 116.70h1.600M610.50 118.90h1.600" stroke="#fff" stroke-width="0.6"/></g></svg></div>
<div class="card" style="top:616px;height:132px"></div></div></div>
<div class="abs" style="left:0;top:0;width:2px;height:653px;z-index:9;background:linear-gradient(to right,rgba(20,40,50,.22),rgba(20,40,50,0))"></div>
<div class="abs" style="left:633px;top:38px;width:1.2px;height:615px;z-index:4;background:linear-gradient(to right,rgba(30,40,46,.25),rgba(30,40,46,.62))"></div>
</body></html>
